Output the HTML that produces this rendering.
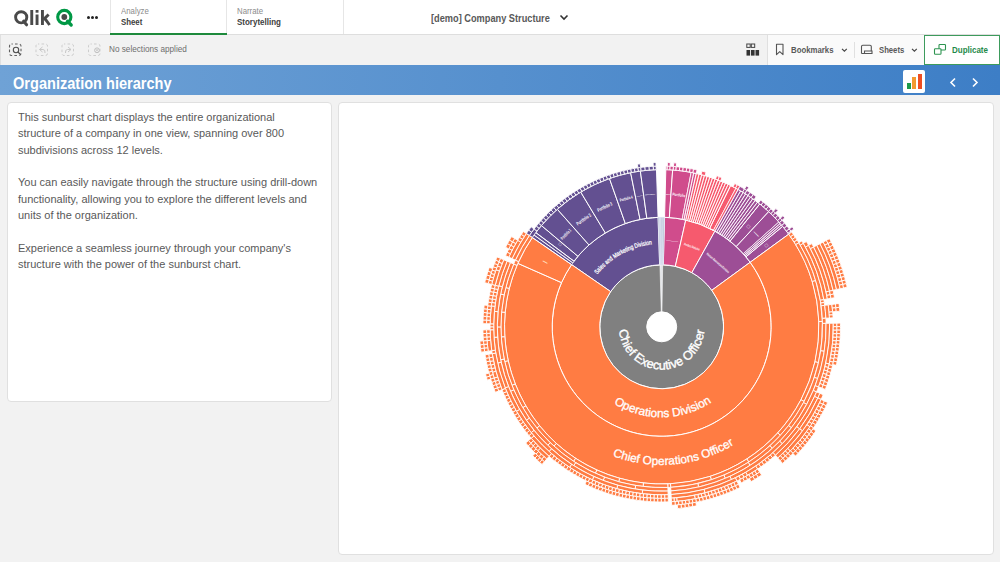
<!DOCTYPE html>
<html><head><meta charset="utf-8">
<style>
*{margin:0;padding:0;box-sizing:border-box}
html,body{width:1000px;height:562px;overflow:hidden;background:#f2f2f2;font-family:"Liberation Sans",sans-serif}
.a{position:absolute}
.t{white-space:nowrap;line-height:1;transform-origin:0 0}
</style></head><body>
<!-- top header -->
<div class="a" style="left:0;top:0;width:1000px;height:35px;background:#fff;border-bottom:1px solid #dedede"></div>
<!-- logo -->
<svg class="a" style="left:13px;top:7px" width="64" height="21" viewBox="0 0 64 21">
<g fill="none" stroke="#4a4a4a" stroke-width="2.9">
<circle cx="8.2" cy="10.3" r="5.6"/>
</g>
<path d="M10.6 14.2 L13.6 17.8" stroke="#4a4a4a" stroke-width="3" stroke-linecap="round"/>
<rect x="17.3" y="3" width="2.9" height="15" fill="#4a4a4a"/>
<rect x="22.6" y="7.5" width="2.9" height="10.5" fill="#4a4a4a"/>
<rect x="22.6" y="3" width="2.9" height="2.7" fill="#4a4a4a"/>
<rect x="28" y="3" width="2.9" height="15" fill="#4a4a4a"/>
<path d="M30.5 12.6 L35.6 7.5 M31.8 11.4 L36.6 18" stroke="#4a4a4a" stroke-width="2.9"/>
<circle cx="51.3" cy="10" r="6.6" fill="none" stroke="#009845" stroke-width="3.1"/>
<circle cx="51.3" cy="10" r="2.9" fill="#4a4a4a"/>
<path d="M54.6 14.3 L58.2 18" stroke="#009845" stroke-width="3.3" stroke-linecap="round"/>
</svg>
<div class="a" style="left:87px;top:16px;width:2.6px;height:2.6px;border-radius:2px;background:#222"></div>
<div class="a" style="left:91px;top:16px;width:2.6px;height:2.6px;border-radius:2px;background:#222"></div>
<div class="a" style="left:95px;top:16px;width:2.6px;height:2.6px;border-radius:2px;background:#222"></div>
<!-- tabs -->
<div class="a" style="left:110px;top:0;width:1px;height:34px;background:#e6e6e6"></div>
<div class="a" style="left:226px;top:0;width:1px;height:34px;background:#e6e6e6"></div>
<div class="a" style="left:343px;top:0;width:1px;height:34px;background:#e6e6e6"></div>
<div class="a" style="left:110px;top:33px;width:117px;height:2px;background:#1e8a3c"></div>
<div class="a t" style="left:121px;top:6.5px;font-size:9px;color:#8c8c8c;transform:scaleX(0.87)">Analyze</div>
<div class="a t" style="left:121px;top:17.5px;font-size:9px;font-weight:bold;color:#404040;transform:scaleX(0.87)">Sheet</div>
<div class="a t" style="left:237px;top:6.5px;font-size:9px;color:#8c8c8c;transform:scaleX(0.87)">Narrate</div>
<div class="a t" style="left:237px;top:17.5px;font-size:9px;font-weight:bold;color:#404040;transform:scaleX(0.887)">Storytelling</div>
<!-- title -->
<div class="a t" style="left:431px;top:12.5px;font-size:10.6px;font-weight:bold;color:#595959;transform:scaleX(0.87)">[demo] Company Structure</div>
<svg class="a" style="left:558px;top:13px" width="12" height="10" viewBox="0 0 12 10"><path d="M2.5 2.5 L6 6 L9.5 2.5" fill="none" stroke="#333" stroke-width="1.6"/></svg>

<!-- toolbar -->
<div class="a" style="left:767px;top:35px;width:158px;height:30px;background:#fafafa;border-left:1px solid #e0e0e0"></div>
<div class="a" style="left:0;top:35px;width:1px;height:30px;background:#e0e0e0"></div>
<svg class="a" style="left:0;top:35px" width="110" height="30" viewBox="0 35 110 30">
<rect x="9.5" y="44" width="11.5" height="11.5" rx="2" fill="none" stroke="#606060" stroke-width="1.1" stroke-dasharray="2.6 2.2" stroke-dashoffset="1.3"/>
<circle cx="16" cy="50" r="2.7" fill="none" stroke="#505050" stroke-width="1.1"/>
<path d="M18 52 L20.6 54.6" stroke="#505050" stroke-width="1.3"/>
<rect x="36" y="44" width="11.5" height="11.5" rx="2" fill="none" stroke="#cdcdcd" stroke-width="1" stroke-dasharray="2.6 2.2" stroke-dashoffset="1.3"/>
<path d="M39.5 49.5 L42.5 47 M39.5 49.5 L42.5 52 M39.5 49.5 H43 Q45.5 49.5 45 53" fill="none" stroke="#c8c8c8" stroke-width="1"/>
<rect x="62" y="44" width="11.5" height="11.5" rx="2" fill="none" stroke="#cdcdcd" stroke-width="1" stroke-dasharray="2.6 2.2" stroke-dashoffset="1.3"/>
<path d="M71 49.5 L68 47 M71 49.5 L68 52 M71 49.5 H67.5 Q65 49.5 65.5 53" fill="none" stroke="#c8c8c8" stroke-width="1"/>
<rect x="88.5" y="44" width="11.5" height="11.5" rx="2" fill="none" stroke="#cdcdcd" stroke-width="1" stroke-dasharray="2.6 2.2" stroke-dashoffset="1.3"/>
<circle cx="97" cy="50.3" r="2.4" fill="none" stroke="#c0c0c0" stroke-width="1"/>
<path d="M95.8 49.1 L98.2 51.5 M98.2 49.1 L95.8 51.5" stroke="#c0c0c0" stroke-width="0.8"/>
</svg>
<div class="a t" style="left:109.4px;top:45.2px;font-size:9px;color:#6e6e6e;transform:scaleX(0.91)">No selections applied</div>
<!-- right toolbar -->
<svg class="a" style="left:740px;top:35px" width="260" height="30" viewBox="740 35 260 30">
<rect x="746.8" y="44" width="3.4" height="3.4" fill="none" stroke="#444" stroke-width="1"/>
<rect x="751.3" y="44" width="3.4" height="3.4" fill="none" stroke="#444" stroke-width="1"/>
<rect x="746.5" y="50" width="3.6" height="5.6" fill="#333"/>
<rect x="751" y="50" width="3.6" height="5.6" fill="#333"/>
<rect x="755.5" y="50" width="3.6" height="5.6" fill="#333"/>
<path d="M776.5 44.2 H783 V54.6 L779.75 51.6 L776.5 54.6 Z" fill="none" stroke="#555" stroke-width="1.1" stroke-linejoin="round"/>
<path d="M842 48.8 L844.4 51.2 L846.8 48.8" fill="none" stroke="#444" stroke-width="1.2"/>
<rect x="854" y="42" width="1" height="16" fill="#e0e0e0"/>
<path d="M861.5 53.5 V46.5 Q861.5 45.2 862.8 45.2 H870 Q871.3 45.2 871.3 46.5 V50.5 M861.5 53.5 H872 V51 H864.5 V53.5" fill="none" stroke="#555" stroke-width="1.1"/>
<path d="M912 48.8 L914.4 51.2 L916.8 48.8" fill="none" stroke="#444" stroke-width="1.2"/>
<rect x="924.5" y="35.5" width="75" height="29" fill="#fff" stroke="#3d9b5c" stroke-width="1"/>
<rect x="939" y="44.5" width="6.5" height="5.5" rx="0.8" fill="#fff" stroke="#2d9450" stroke-width="1.1"/>
<rect x="934.5" y="48.8" width="6.5" height="5.5" rx="0.8" fill="#fff" stroke="#2d9450" stroke-width="1.1"/>
</svg>
<div class="a t" style="left:791.4px;top:45px;font-size:9.8px;font-weight:bold;color:#595959;transform:scaleX(0.796)">Bookmarks</div>
<div class="a t" style="left:878.8px;top:45px;font-size:9.8px;font-weight:bold;color:#595959;transform:scaleX(0.785)">Sheets</div>
<div class="a t" style="left:952px;top:45px;font-size:9.8px;font-weight:bold;color:#1f8a4a;transform:scaleX(0.816)">Duplicate</div>

<!-- title bar -->
<div class="a" style="left:0;top:65px;width:1000px;height:30px;background:linear-gradient(90deg,#6fa2d6,#3d7ec6)"></div>
<div class="a t" style="left:13px;top:75.5px;font-size:16px;font-weight:bold;color:#fff;transform:scaleX(0.91)">Organization hierarchy</div>
<div class="a" style="left:902.5px;top:70px;width:22px;height:22.5px;background:#fff;border-radius:2px"></div>
<div class="a" style="left:907px;top:82.5px;width:3.5px;height:6px;background:#1d9a4a"></div>
<div class="a" style="left:911.8px;top:77px;width:4px;height:11.5px;background:#f39a31"></div>
<div class="a" style="left:917.6px;top:73.5px;width:4px;height:15px;background:#ee4e22"></div>
<svg class="a" style="left:940px;top:70px" width="50" height="25" viewBox="940 70 50 25">
<path d="M955 78.5 L951 82.5 L955 86.5" fill="none" stroke="#fff" stroke-width="1.6"/>
<path d="M973 78.5 L977 82.5 L973 86.5" fill="none" stroke="#fff" stroke-width="1.6"/>
</svg>

<!-- panels -->
<div class="a" style="left:6.5px;top:101.5px;width:325px;height:300.5px;background:#fff;border:1px solid #e0e0e0;border-radius:4px"></div>
<div class="a" style="left:337.5px;top:101.5px;width:656px;height:453.5px;background:#fff;border:1px solid #e0e0e0;border-radius:4px"></div>

<div class="a" style="left:18px;top:109px;font-size:11px;line-height:16.35px;color:#595959;white-space:nowrap">This sunburst chart displays the entire organizational<br>structure of a company in one view, spanning over 800<br>subdivisions across 12 levels.<br><br>You can easily navigate through the structure using drill-down<br>functionality, allowing you to explore the different levels and<br>units of the organization.<br><br>Experience a seamless journey through your company's<br>structure with the power of the sunburst chart.</div>

<svg class="a" style="left:0;top:0" width="1000" height="562" viewBox="0 0 1000 562"><path d="M599.70,326.80A62,62 0 1 1 723.70,326.80A62,62 0 1 1 599.70,326.80ZM646.70,326.80A15,15 0 1 0 676.70,326.80A15,15 0 1 0 646.70,326.80Z" fill="#808080" fill-rule="evenodd" stroke="#fff" stroke-width="1.0"/><path d="M659.97,264.82A62,62 0 0 1 662.67,264.81L661.94,311.80A15,15 0 0 0 661.28,311.81Z" fill="#e4e6ea" stroke="#fff" stroke-width="0.6"/><path d="M571.57,264.62A109.5,109.5 0 0 1 658.07,217.36L659.64,264.83A62,62 0 0 0 610.67,291.59Z" fill="#635091" stroke="#fff" stroke-width="1.0"/><path d="M664.57,217.34A109.5,109.5 0 0 1 685.77,219.98L675.33,266.32A62,62 0 0 0 663.32,264.82Z" fill="#d04c8c" stroke="#fff" stroke-width="1.0"/><path d="M685.77,219.98A109.5,109.5 0 0 1 714.95,231.12L691.85,272.63A62,62 0 0 0 675.33,266.32Z" fill="#f65a6e" stroke="#fff" stroke-width="1.0"/><path d="M714.95,231.12A109.5,109.5 0 0 1 750.17,262.28L711.80,290.27A62,62 0 0 0 691.85,272.63Z" fill="#9d4e96" stroke="#fff" stroke-width="1.0"/><path d="M750.17,262.28A109.5,109.5 0 1 1 571.57,264.62L610.67,291.59A62,62 0 1 0 711.80,290.27Z" fill="#ff7c43" stroke="#fff" stroke-width="1.0"/><path d="M658.07,217.36A109.5,109.5 0 0 1 659.60,217.32L660.51,264.81A62,62 0 0 0 659.64,264.83Z" fill="#a9b8c9" stroke="#eef" stroke-width="0.5"/><path d="M659.60,217.32A109.5,109.5 0 0 1 660.74,217.30L661.16,264.80A62,62 0 0 0 660.51,264.81Z" fill="#a9b8c9" stroke="#eef" stroke-width="0.5"/><path d="M660.74,217.30A109.5,109.5 0 0 1 662.08,217.30L661.92,264.80A62,62 0 0 0 661.16,264.80Z" fill="#a9b8c9" stroke="#eef" stroke-width="0.5"/><path d="M662.08,217.30A109.5,109.5 0 0 1 663.23,217.31L662.57,264.81A62,62 0 0 0 661.92,264.80Z" fill="#a9b8c9" stroke="#eef" stroke-width="0.5"/><path d="M663.23,217.31A109.5,109.5 0 0 1 664.57,217.34L663.32,264.82A62,62 0 0 0 662.57,264.81Z" fill="#a9b8c9" stroke="#eef" stroke-width="0.5"/><path d="M532.30,237.53A157.2,157.2 0 0 1 534.04,235.07L572.78,262.90A109.5,109.5 0 0 0 571.57,264.62Z" fill="#635091" stroke="none" stroke-width="0"/><path d="M534.04,235.07A157.2,157.2 0 0 1 535.83,232.63L574.02,261.21A109.5,109.5 0 0 0 572.78,262.90Z" fill="#635091" stroke="none" stroke-width="0"/><path d="M535.83,232.63A157.2,157.2 0 0 1 541.45,225.54L577.94,256.27A109.5,109.5 0 0 0 574.02,261.21Z" fill="#635091" stroke="#fff" stroke-width="1.0"/><path d="M541.45,225.54A157.2,157.2 0 0 1 557.33,209.25L589.00,244.92A109.5,109.5 0 0 0 577.94,256.27Z" fill="#635091" stroke="#fff" stroke-width="1.0"/><path d="M557.33,209.25A157.2,157.2 0 0 1 580.74,192.05L605.30,232.94A109.5,109.5 0 0 0 589.00,244.92Z" fill="#635091" stroke="#fff" stroke-width="1.0"/><path d="M580.74,192.05A157.2,157.2 0 0 1 609.48,178.53L625.33,223.52A109.5,109.5 0 0 0 605.30,232.94Z" fill="#635091" stroke="#fff" stroke-width="1.0"/><path d="M609.48,178.53A157.2,157.2 0 0 1 630.63,172.70L640.06,219.46A109.5,109.5 0 0 0 625.33,223.52Z" fill="#635091" stroke="#fff" stroke-width="1.0"/><path d="M630.63,172.70A157.2,157.2 0 0 1 640.37,171.05L646.84,218.31A109.5,109.5 0 0 0 640.06,219.46Z" fill="#635091" stroke="#fff" stroke-width="1.0"/><path d="M640.37,171.05A157.2,157.2 0 0 1 656.49,169.69L658.07,217.36A109.5,109.5 0 0 0 646.84,218.31Z" fill="#635091" stroke="#fff" stroke-width="1.0"/><path d="M665.82,169.65A157.2,157.2 0 0 1 672.67,169.98L669.34,217.57A109.5,109.5 0 0 0 664.57,217.34Z" fill="#d04c8c" stroke="#fff" stroke-width="1.0"/><path d="M672.67,169.98A157.2,157.2 0 0 1 691.16,172.38L682.22,219.24A109.5,109.5 0 0 0 669.34,217.57Z" fill="#d04c8c" stroke="#fff" stroke-width="1.0"/><path d="M691.16,172.38A157.2,157.2 0 0 1 693.71,172.89L684.00,219.59A109.5,109.5 0 0 0 682.22,219.24Z" fill="#d04c8c" stroke="none" stroke-width="0"/><path d="M693.71,172.89A157.2,157.2 0 0 1 696.26,173.45L685.77,219.98A109.5,109.5 0 0 0 684.00,219.59Z" fill="#d04c8c" stroke="none" stroke-width="0"/><path d="M696.26,173.45A157.2,157.2 0 0 1 698.99,174.09L687.68,220.43A109.5,109.5 0 0 0 685.77,219.98Z" fill="#f65a6e" stroke="none" stroke-width="0"/><path d="M698.99,174.09A157.2,157.2 0 0 1 701.71,174.78L689.57,220.91A109.5,109.5 0 0 0 687.68,220.43Z" fill="#f65a6e" stroke="none" stroke-width="0"/><path d="M701.71,174.78A157.2,157.2 0 0 1 704.42,175.52L691.46,221.42A109.5,109.5 0 0 0 689.57,220.91Z" fill="#f65a6e" stroke="none" stroke-width="0"/><path d="M704.42,175.52A157.2,157.2 0 0 1 707.12,176.30L693.33,221.97A109.5,109.5 0 0 0 691.46,221.42Z" fill="#f65a6e" stroke="none" stroke-width="0"/><path d="M707.12,176.30A157.2,157.2 0 0 1 709.80,177.14L695.20,222.55A109.5,109.5 0 0 0 693.33,221.97Z" fill="#f65a6e" stroke="none" stroke-width="0"/><path d="M709.80,177.14A157.2,157.2 0 0 1 712.46,178.02L697.06,223.17A109.5,109.5 0 0 0 695.20,222.55Z" fill="#f65a6e" stroke="none" stroke-width="0"/><path d="M712.46,178.02A157.2,157.2 0 0 1 715.11,178.95L698.90,223.81A109.5,109.5 0 0 0 697.06,223.17Z" fill="#f65a6e" stroke="none" stroke-width="0"/><path d="M715.11,178.95A157.2,157.2 0 0 1 717.74,179.93L700.74,224.49A109.5,109.5 0 0 0 698.90,223.81Z" fill="#f65a6e" stroke="none" stroke-width="0"/><path d="M717.74,179.93A157.2,157.2 0 0 1 720.35,180.95L702.56,225.21A109.5,109.5 0 0 0 700.74,224.49Z" fill="#f65a6e" stroke="none" stroke-width="0"/><path d="M720.35,180.95A157.2,157.2 0 0 1 722.95,182.02L704.36,225.95A109.5,109.5 0 0 0 702.56,225.21Z" fill="#f65a6e" stroke="none" stroke-width="0"/><path d="M722.95,182.02A157.2,157.2 0 0 1 725.52,183.14L706.16,226.73A109.5,109.5 0 0 0 704.36,225.95Z" fill="#f65a6e" stroke="none" stroke-width="0"/><path d="M725.52,183.14A157.2,157.2 0 0 1 728.08,184.30L707.94,227.54A109.5,109.5 0 0 0 706.16,226.73Z" fill="#f65a6e" stroke="none" stroke-width="0"/><path d="M728.08,184.30A157.2,157.2 0 0 1 730.61,185.51L709.70,228.38A109.5,109.5 0 0 0 707.94,227.54Z" fill="#f65a6e" stroke="none" stroke-width="0"/><path d="M730.61,185.51A157.2,157.2 0 0 1 735.98,188.26L713.44,230.30A109.5,109.5 0 0 0 709.70,228.38Z" fill="#f65a6e" stroke="#fff" stroke-width="1.0"/><path d="M735.98,188.26A157.2,157.2 0 0 1 738.15,189.44L714.95,231.12A109.5,109.5 0 0 0 713.44,230.30Z" fill="#f65a6e" stroke="none" stroke-width="0"/><path d="M738.15,189.44A157.2,157.2 0 0 1 740.67,190.87L716.71,232.12A109.5,109.5 0 0 0 714.95,231.12Z" fill="#9d4e96" stroke="none" stroke-width="0"/><path d="M740.67,190.87A157.2,157.2 0 0 1 743.16,192.35L718.44,233.15A109.5,109.5 0 0 0 716.71,232.12Z" fill="#9d4e96" stroke="none" stroke-width="0"/><path d="M743.16,192.35A157.2,157.2 0 0 1 745.62,193.88L720.16,234.21A109.5,109.5 0 0 0 718.44,233.15Z" fill="#9d4e96" stroke="none" stroke-width="0"/><path d="M745.62,193.88A157.2,157.2 0 0 1 748.06,195.44L721.85,235.30A109.5,109.5 0 0 0 720.16,234.21Z" fill="#9d4e96" stroke="none" stroke-width="0"/><path d="M748.06,195.44A157.2,157.2 0 0 1 750.46,197.06L723.53,236.43A109.5,109.5 0 0 0 721.85,235.30Z" fill="#9d4e96" stroke="none" stroke-width="0"/><path d="M750.46,197.06A157.2,157.2 0 0 1 752.84,198.71L725.18,237.58A109.5,109.5 0 0 0 723.53,236.43Z" fill="#9d4e96" stroke="none" stroke-width="0"/><path d="M752.84,198.71A157.2,157.2 0 0 1 755.18,200.42L726.82,238.77A109.5,109.5 0 0 0 725.18,237.58Z" fill="#9d4e96" stroke="none" stroke-width="0"/><path d="M755.18,200.42A157.2,157.2 0 0 1 757.49,202.16L728.43,239.98A109.5,109.5 0 0 0 726.82,238.77Z" fill="#9d4e96" stroke="none" stroke-width="0"/><path d="M757.49,202.16A157.2,157.2 0 0 1 759.77,203.94L730.01,241.22A109.5,109.5 0 0 0 728.43,239.98Z" fill="#9d4e96" stroke="none" stroke-width="0"/><path d="M759.77,203.94A157.2,157.2 0 0 1 768.71,211.64L736.24,246.59A109.5,109.5 0 0 0 730.01,241.22Z" fill="#9d4e96" stroke="#fff" stroke-width="1.0"/><path d="M768.71,211.64A157.2,157.2 0 0 1 778.89,222.02L743.33,253.81A109.5,109.5 0 0 0 736.24,246.59Z" fill="#9d4e96" stroke="#fff" stroke-width="1.0"/><path d="M778.89,222.02A157.2,157.2 0 0 1 780.16,223.46L744.22,254.82A109.5,109.5 0 0 0 743.33,253.81Z" fill="#9d4e96" stroke="none" stroke-width="0"/><path d="M780.16,223.46A157.2,157.2 0 0 1 781.41,224.92L745.09,255.83A109.5,109.5 0 0 0 744.22,254.82Z" fill="#9d4e96" stroke="none" stroke-width="0"/><path d="M781.41,224.92A157.2,157.2 0 0 1 782.65,226.39L745.95,256.85A109.5,109.5 0 0 0 745.09,255.83Z" fill="#9d4e96" stroke="none" stroke-width="0"/><path d="M782.65,226.39A157.2,157.2 0 0 1 788.72,234.18L750.17,262.28A109.5,109.5 0 0 0 745.95,256.85Z" fill="#9d4e96" stroke="#fff" stroke-width="1.0"/><path d="M788.72,234.18A157.2,157.2 0 1 1 517.87,263.36L561.51,282.61A109.5,109.5 0 1 0 750.17,262.28Z" fill="#ff7c43" stroke="#fff" stroke-width="1.0"/><path d="M517.87,263.36A157.2,157.2 0 0 1 532.30,237.53L571.57,264.62A109.5,109.5 0 0 0 561.51,282.61Z" fill="#ff7c43" stroke="#fff" stroke-width="1.0"/><path d="M571.57,264.62L532.30,237.53M572.78,262.90L534.04,235.07M572.78,262.90L534.04,235.07M574.02,261.21L535.83,232.63M682.22,219.24L691.16,172.38M684.00,219.59L693.71,172.89M684.00,219.59L693.71,172.89M685.77,219.98L696.26,173.45M685.77,219.98L696.26,173.45M687.68,220.43L698.99,174.09M687.68,220.43L698.99,174.09M689.57,220.91L701.71,174.78M689.57,220.91L701.71,174.78M691.46,221.42L704.42,175.52M691.46,221.42L704.42,175.52M693.33,221.97L707.12,176.30M693.33,221.97L707.12,176.30M695.20,222.55L709.80,177.14M695.20,222.55L709.80,177.14M697.06,223.17L712.46,178.02M697.06,223.17L712.46,178.02M698.90,223.81L715.11,178.95M698.90,223.81L715.11,178.95M700.74,224.49L717.74,179.93M700.74,224.49L717.74,179.93M702.56,225.21L720.35,180.95M702.56,225.21L720.35,180.95M704.36,225.95L722.95,182.02M704.36,225.95L722.95,182.02M706.16,226.73L725.52,183.14M706.16,226.73L725.52,183.14M707.94,227.54L728.08,184.30M707.94,227.54L728.08,184.30M709.70,228.38L730.61,185.51M713.44,230.30L735.98,188.26M714.95,231.12L738.15,189.44M714.95,231.12L738.15,189.44M716.71,232.12L740.67,190.87M716.71,232.12L740.67,190.87M718.44,233.15L743.16,192.35M718.44,233.15L743.16,192.35M720.16,234.21L745.62,193.88M720.16,234.21L745.62,193.88M721.85,235.30L748.06,195.44M721.85,235.30L748.06,195.44M723.53,236.43L750.46,197.06M723.53,236.43L750.46,197.06M725.18,237.58L752.84,198.71M725.18,237.58L752.84,198.71M726.82,238.77L755.18,200.42M726.82,238.77L755.18,200.42M728.43,239.98L757.49,202.16M728.43,239.98L757.49,202.16M730.01,241.22L759.77,203.94M743.33,253.81L778.89,222.02M744.22,254.82L780.16,223.46M744.22,254.82L780.16,223.46M745.09,255.83L781.41,224.92M745.09,255.83L781.41,224.92M745.95,256.85L782.65,226.39" stroke="#fff" stroke-width="0.75" fill="none"/><path d="M682.22,219.24A109.5,109.5 0 0 1 714.95,231.12" stroke="#fff" stroke-width="1" fill="none"/><path d="M691.16,172.38A157.2,157.2 0 0 1 738.15,189.44" stroke="#fff" stroke-width="1" fill="none"/><path d="M714.95,231.12A109.5,109.5 0 0 1 730.01,241.22" stroke="#fff" stroke-width="1" fill="none"/><path d="M738.15,189.44A157.2,157.2 0 0 1 759.77,203.94" stroke="#fff" stroke-width="1" fill="none"/><path d="M743.33,253.81A109.5,109.5 0 0 1 745.95,256.85" stroke="#fff" stroke-width="1" fill="none"/><path d="M778.89,222.02A157.2,157.2 0 0 1 782.65,226.39" stroke="#fff" stroke-width="1" fill="none"/><path d="M529.34,235.49A160.79999999999998,160.79999999999998 0 0 1 534.13,228.91L536.98,231.10A157.2,157.2 0 0 0 532.30,237.53Z" fill="#635091" stroke="#fff" stroke-width="0.9"/><path d="M534.13,228.91A160.79999999999998,160.79999999999998 0 0 1 536.37,226.05L539.18,228.31A157.2,157.2 0 0 0 536.98,231.10Z" fill="#635091" stroke="#fff" stroke-width="0.9"/><path d="M536.37,226.05A160.79999999999998,160.79999999999998 0 0 1 538.68,223.25L541.43,225.57A157.2,157.2 0 0 0 539.18,228.31Z" fill="#635091" stroke="#fff" stroke-width="0.9"/><path d="M538.68,223.25A160.79999999999998,160.79999999999998 0 0 1 541.05,220.50L543.75,222.88A157.2,157.2 0 0 0 541.43,225.57Z" fill="#635091" stroke="#fff" stroke-width="0.9"/><path d="M541.05,220.50A160.79999999999998,160.79999999999998 0 0 1 543.48,217.80L546.13,220.24A157.2,157.2 0 0 0 543.75,222.88Z" fill="#635091" stroke="#fff" stroke-width="0.9"/><path d="M543.48,217.80A160.79999999999998,160.79999999999998 0 0 1 545.97,215.16L548.56,217.66A157.2,157.2 0 0 0 546.13,220.24Z" fill="#635091" stroke="#fff" stroke-width="0.9"/><path d="M545.97,215.16A160.79999999999998,160.79999999999998 0 0 1 548.52,212.57L551.06,215.13A157.2,157.2 0 0 0 548.56,217.66Z" fill="#635091" stroke="#fff" stroke-width="0.9"/><path d="M548.52,212.57A160.79999999999998,160.79999999999998 0 0 1 551.13,210.05L553.61,212.66A157.2,157.2 0 0 0 551.06,215.13Z" fill="#635091" stroke="#fff" stroke-width="0.9"/><path d="M551.13,210.05A160.79999999999998,160.79999999999998 0 0 1 553.80,207.58L556.21,210.25A157.2,157.2 0 0 0 553.61,212.66Z" fill="#635091" stroke="#fff" stroke-width="0.9"/><path d="M553.80,207.58A160.79999999999998,160.79999999999998 0 0 1 556.52,205.17L558.87,207.90A157.2,157.2 0 0 0 556.21,210.25Z" fill="#635091" stroke="#fff" stroke-width="0.9"/><path d="M556.52,205.17A160.79999999999998,160.79999999999998 0 0 1 559.29,202.83L561.58,205.60A157.2,157.2 0 0 0 558.87,207.90Z" fill="#635091" stroke="#fff" stroke-width="0.9"/><path d="M559.29,202.83A160.79999999999998,160.79999999999998 0 0 1 562.12,200.55L564.35,203.37A157.2,157.2 0 0 0 561.58,205.60Z" fill="#635091" stroke="#fff" stroke-width="0.9"/><path d="M562.12,200.55A160.79999999999998,160.79999999999998 0 0 1 564.99,198.33L567.16,201.21A157.2,157.2 0 0 0 564.35,203.37Z" fill="#635091" stroke="#fff" stroke-width="0.9"/><path d="M564.99,198.33A160.79999999999998,160.79999999999998 0 0 1 567.92,196.18L570.02,199.10A157.2,157.2 0 0 0 567.16,201.21Z" fill="#635091" stroke="#fff" stroke-width="0.9"/><path d="M567.92,196.18A160.79999999999998,160.79999999999998 0 0 1 570.89,194.09L572.93,197.06A157.2,157.2 0 0 0 570.02,199.10Z" fill="#635091" stroke="#fff" stroke-width="0.9"/><path d="M570.89,194.09A160.79999999999998,160.79999999999998 0 0 1 573.91,192.08L575.88,195.09A157.2,157.2 0 0 0 572.93,197.06Z" fill="#635091" stroke="#fff" stroke-width="0.9"/><path d="M573.91,192.08A160.79999999999998,160.79999999999998 0 0 1 576.98,190.13L578.88,193.19A157.2,157.2 0 0 0 575.88,195.09Z" fill="#635091" stroke="#fff" stroke-width="0.9"/><path d="M576.98,190.13A160.79999999999998,160.79999999999998 0 0 1 580.09,188.25L581.91,191.35A157.2,157.2 0 0 0 578.88,193.19Z" fill="#635091" stroke="#fff" stroke-width="0.9"/><path d="M580.09,188.25A160.79999999999998,160.79999999999998 0 0 1 583.24,186.44L584.99,189.58A157.2,157.2 0 0 0 581.91,191.35Z" fill="#635091" stroke="#fff" stroke-width="0.9"/><path d="M583.24,186.44A160.79999999999998,160.79999999999998 0 0 1 586.43,184.71L588.11,187.89A157.2,157.2 0 0 0 584.99,189.58Z" fill="#635091" stroke="#fff" stroke-width="0.9"/><path d="M586.43,184.71A160.79999999999998,160.79999999999998 0 0 1 589.66,183.04L591.27,186.26A157.2,157.2 0 0 0 588.11,187.89Z" fill="#635091" stroke="#fff" stroke-width="0.9"/><path d="M589.66,183.04A160.79999999999998,160.79999999999998 0 0 1 592.92,181.45L594.46,184.71A157.2,157.2 0 0 0 591.27,186.26Z" fill="#635091" stroke="#fff" stroke-width="0.9"/><path d="M592.92,181.45A160.79999999999998,160.79999999999998 0 0 1 596.22,179.94L597.69,183.22A157.2,157.2 0 0 0 594.46,184.71Z" fill="#635091" stroke="#fff" stroke-width="0.9"/><path d="M596.22,179.94A160.79999999999998,160.79999999999998 0 0 1 599.55,178.49L600.95,181.81A157.2,157.2 0 0 0 597.69,183.22Z" fill="#635091" stroke="#fff" stroke-width="0.9"/><path d="M599.55,178.49A160.79999999999998,160.79999999999998 0 0 1 602.92,177.13L604.24,180.48A157.2,157.2 0 0 0 600.95,181.81Z" fill="#635091" stroke="#fff" stroke-width="0.9"/><path d="M602.92,177.13A160.79999999999998,160.79999999999998 0 0 1 606.32,175.84L607.56,179.22A157.2,157.2 0 0 0 604.24,180.48Z" fill="#635091" stroke="#fff" stroke-width="0.9"/><path d="M606.32,175.84A160.79999999999998,160.79999999999998 0 0 1 609.74,174.63L610.90,178.03A157.2,157.2 0 0 0 607.56,179.22Z" fill="#635091" stroke="#fff" stroke-width="0.9"/><path d="M609.74,174.63A160.79999999999998,160.79999999999998 0 0 1 613.19,173.49L614.28,176.92A157.2,157.2 0 0 0 610.90,178.03Z" fill="#635091" stroke="#fff" stroke-width="0.9"/><path d="M613.19,173.49A160.79999999999998,160.79999999999998 0 0 1 616.66,172.44L617.67,175.89A157.2,157.2 0 0 0 614.28,176.92Z" fill="#635091" stroke="#fff" stroke-width="0.9"/><path d="M616.66,172.44A160.79999999999998,160.79999999999998 0 0 1 620.16,171.46L621.09,174.94A157.2,157.2 0 0 0 617.67,175.89Z" fill="#635091" stroke="#fff" stroke-width="0.9"/><path d="M620.16,171.46A160.79999999999998,160.79999999999998 0 0 1 623.68,170.56L624.53,174.06A157.2,157.2 0 0 0 621.09,174.94Z" fill="#635091" stroke="#fff" stroke-width="0.9"/><path d="M623.68,170.56A160.79999999999998,160.79999999999998 0 0 1 627.22,169.74L627.99,173.26A157.2,157.2 0 0 0 624.53,174.06Z" fill="#635091" stroke="#fff" stroke-width="0.9"/><path d="M627.22,169.74A160.79999999999998,160.79999999999998 0 0 1 630.77,169.00L631.47,172.53A157.2,157.2 0 0 0 627.99,173.26Z" fill="#635091" stroke="#fff" stroke-width="0.9"/><path d="M630.77,169.00A160.79999999999998,160.79999999999998 0 0 1 634.35,168.34L634.96,171.89A157.2,157.2 0 0 0 631.47,172.53Z" fill="#635091" stroke="#fff" stroke-width="0.9"/><path d="M634.35,168.34A160.79999999999998,160.79999999999998 0 0 1 637.93,167.77L638.46,171.33A157.2,157.2 0 0 0 634.96,171.89Z" fill="#635091" stroke="#fff" stroke-width="0.9"/><path d="M637.93,167.77A160.79999999999998,160.79999999999998 0 0 1 640.71,167.38L641.18,170.94A157.2,157.2 0 0 0 638.46,171.33Z" fill="#635091" stroke="#fff" stroke-width="0.9"/><path d="M640.71,167.38A160.79999999999998,160.79999999999998 0 0 1 644.89,166.88L645.27,170.46A157.2,157.2 0 0 0 641.18,170.94Z" fill="#635091" stroke="#fff" stroke-width="0.9"/><path d="M644.89,166.88A160.79999999999998,160.79999999999998 0 0 1 649.08,166.50L649.37,170.08A157.2,157.2 0 0 0 645.27,170.46Z" fill="#635091" stroke="#fff" stroke-width="0.9"/><path d="M649.08,166.50A160.79999999999998,160.79999999999998 0 0 1 653.28,166.22L653.47,169.82A157.2,157.2 0 0 0 649.37,170.08Z" fill="#635091" stroke="#fff" stroke-width="0.9"/><path d="M653.28,166.22A160.79999999999998,160.79999999999998 0 0 1 656.09,166.10L656.21,169.70A157.2,157.2 0 0 0 653.47,169.82Z" fill="#635091" stroke="#fff" stroke-width="0.9"/><path d="M665.91,166.06A160.79999999999998,160.79999999999998 0 0 1 667.31,166.10L667.19,169.70A157.2,157.2 0 0 0 665.82,169.65Z" fill="#d04c8c" stroke="#fff" stroke-width="0.9"/><path d="M667.31,166.10A160.79999999999998,160.79999999999998 0 0 1 670.12,166.22L669.93,169.82A157.2,157.2 0 0 0 667.19,169.70Z" fill="#d04c8c" stroke="#fff" stroke-width="0.9"/><path d="M670.12,166.22A160.79999999999998,160.79999999999998 0 0 1 673.48,166.43L673.21,170.02A157.2,157.2 0 0 0 669.93,169.82Z" fill="#d04c8c" stroke="#fff" stroke-width="0.9"/><path d="M673.48,166.43A160.79999999999998,160.79999999999998 0 0 1 676.27,166.66L675.95,170.25A157.2,157.2 0 0 0 673.21,170.02Z" fill="#d04c8c" stroke="#fff" stroke-width="0.9"/><path d="M676.27,166.66A160.79999999999998,160.79999999999998 0 0 1 679.76,167.02L679.36,170.60A157.2,157.2 0 0 0 675.95,170.25Z" fill="#d04c8c" stroke="#fff" stroke-width="0.9"/><path d="M679.76,167.02A160.79999999999998,160.79999999999998 0 0 1 683.24,167.45L682.76,171.02A157.2,157.2 0 0 0 679.36,170.60Z" fill="#d04c8c" stroke="#fff" stroke-width="0.9"/><path d="M683.24,167.45A160.79999999999998,160.79999999999998 0 0 1 686.72,167.96L686.16,171.51A157.2,157.2 0 0 0 682.76,171.02Z" fill="#d04c8c" stroke="#fff" stroke-width="0.9"/><path d="M686.72,167.96A160.79999999999998,160.79999999999998 0 0 1 690.18,168.54L689.54,172.08A157.2,157.2 0 0 0 686.16,171.51Z" fill="#d04c8c" stroke="#fff" stroke-width="0.9"/><path d="M690.18,168.54A160.79999999999998,160.79999999999998 0 0 1 693.62,169.20L692.91,172.73A157.2,157.2 0 0 0 689.54,172.08Z" fill="#d04c8c" stroke="#fff" stroke-width="0.9"/><path d="M693.62,169.20A160.79999999999998,160.79999999999998 0 0 1 697.05,169.93L696.26,173.45A157.2,157.2 0 0 0 692.91,172.73Z" fill="#d04c8c" stroke="#fff" stroke-width="0.9"/><path d="M701.96,171.12A160.79999999999998,160.79999999999998 0 0 1 706.02,172.23L705.03,175.69A157.2,157.2 0 0 0 701.06,174.61Z" fill="#f65a6e" stroke="#fff" stroke-width="0.9"/><path d="M716.70,175.70A160.79999999999998,160.79999999999998 0 0 1 719.33,176.68L718.04,180.04A157.2,157.2 0 0 0 715.47,179.08Z" fill="#f65a6e" stroke="#fff" stroke-width="0.9"/><path d="M719.33,176.68A160.79999999999998,160.79999999999998 0 0 1 721.94,177.71L720.59,181.05A157.2,157.2 0 0 0 718.04,180.04Z" fill="#f65a6e" stroke="#fff" stroke-width="0.9"/><path d="M734.70,183.53A160.79999999999998,160.79999999999998 0 0 1 737.25,184.85L735.56,188.03A157.2,157.2 0 0 0 733.07,186.73Z" fill="#f65a6e" stroke="#fff" stroke-width="0.9"/><path d="M737.25,184.85A160.79999999999998,160.79999999999998 0 0 1 739.78,186.23L738.03,189.38A157.2,157.2 0 0 0 735.56,188.03Z" fill="#f65a6e" stroke="#fff" stroke-width="0.9"/><path d="M739.90,186.30A160.79999999999998,160.79999999999998 0 0 1 744.52,188.97L742.66,192.05A157.2,157.2 0 0 0 738.15,189.44Z" fill="#9d4e96" stroke="#fff" stroke-width="0.9"/><path d="M744.52,188.97A160.79999999999998,160.79999999999998 0 0 1 746.91,190.43L745.00,193.49A157.2,157.2 0 0 0 742.66,192.05Z" fill="#9d4e96" stroke="#fff" stroke-width="0.9"/><path d="M746.91,190.43A160.79999999999998,160.79999999999998 0 0 1 750.06,192.45L748.08,195.46A157.2,157.2 0 0 0 745.00,193.49Z" fill="#9d4e96" stroke="#fff" stroke-width="0.9"/><path d="M750.06,192.45A160.79999999999998,160.79999999999998 0 0 1 753.16,194.55L751.12,197.51A157.2,157.2 0 0 0 748.08,195.46Z" fill="#9d4e96" stroke="#fff" stroke-width="0.9"/><path d="M753.16,194.55A160.79999999999998,160.79999999999998 0 0 1 756.22,196.71L754.10,199.62A157.2,157.2 0 0 0 751.12,197.51Z" fill="#9d4e96" stroke="#fff" stroke-width="0.9"/><path d="M760.70,200.09A160.79999999999998,160.79999999999998 0 0 1 763.33,202.19L761.06,204.98A157.2,157.2 0 0 0 758.48,202.92Z" fill="#9d4e96" stroke="#fff" stroke-width="0.9"/><path d="M763.33,202.19A160.79999999999998,160.79999999999998 0 0 1 765.92,204.34L763.58,207.09A157.2,157.2 0 0 0 761.06,204.98Z" fill="#9d4e96" stroke="#fff" stroke-width="0.9"/><path d="M765.92,204.34A160.79999999999998,160.79999999999998 0 0 1 768.46,206.55L766.07,209.25A157.2,157.2 0 0 0 763.58,207.09Z" fill="#9d4e96" stroke="#fff" stroke-width="0.9"/><path d="M768.46,206.55A160.79999999999998,160.79999999999998 0 0 1 770.95,208.82L768.51,211.46A157.2,157.2 0 0 0 766.07,209.25Z" fill="#9d4e96" stroke="#fff" stroke-width="0.9"/><path d="M770.95,208.82A160.79999999999998,160.79999999999998 0 0 1 773.40,211.13L770.90,213.72A157.2,157.2 0 0 0 768.51,211.46Z" fill="#9d4e96" stroke="#fff" stroke-width="0.9"/><path d="M773.40,211.13A160.79999999999998,160.79999999999998 0 0 1 775.40,213.10L772.86,215.64A157.2,157.2 0 0 0 770.90,213.72Z" fill="#9d4e96" stroke="#fff" stroke-width="0.9"/><path d="M775.40,213.10A160.79999999999998,160.79999999999998 0 0 1 777.86,215.60L775.26,218.09A157.2,157.2 0 0 0 772.86,215.64Z" fill="#9d4e96" stroke="#fff" stroke-width="0.9"/><path d="M777.86,215.60A160.79999999999998,160.79999999999998 0 0 1 780.25,218.17L777.60,220.60A157.2,157.2 0 0 0 775.26,218.09Z" fill="#9d4e96" stroke="#fff" stroke-width="0.9"/><path d="M780.25,218.17A160.79999999999998,160.79999999999998 0 0 1 782.13,220.25L779.44,222.64A157.2,157.2 0 0 0 777.60,220.60Z" fill="#9d4e96" stroke="#fff" stroke-width="0.9"/><path d="M782.13,220.25A160.79999999999998,160.79999999999998 0 0 1 784.58,223.08L781.83,225.40A157.2,157.2 0 0 0 779.44,222.64Z" fill="#9d4e96" stroke="#fff" stroke-width="0.9"/><path d="M784.58,223.08A160.79999999999998,160.79999999999998 0 0 1 786.96,225.97L784.15,228.23A157.2,157.2 0 0 0 781.83,225.40Z" fill="#9d4e96" stroke="#fff" stroke-width="0.9"/><path d="M786.96,225.97A160.79999999999998,160.79999999999998 0 0 1 789.27,228.91L786.42,231.10A157.2,157.2 0 0 0 784.15,228.23Z" fill="#9d4e96" stroke="#fff" stroke-width="0.9"/><path d="M789.27,228.91A160.79999999999998,160.79999999999998 0 0 1 790.96,231.15L788.07,233.29A157.2,157.2 0 0 0 786.42,231.10Z" fill="#9d4e96" stroke="#fff" stroke-width="0.9"/><path d="M790.96,231.15A160.79999999999998,160.79999999999998 0 0 1 791.62,232.06L788.72,234.18A157.2,157.2 0 0 0 788.07,233.29Z" fill="#9d4e96" stroke="#fff" stroke-width="0.9"/><path d="M791.62,232.06A160.79999999999998,160.79999999999998 0 0 1 793.50,234.68L790.55,236.75A157.2,157.2 0 0 0 788.72,234.18Z" fill="#ff7c43" stroke="#fff" stroke-width="0.9"/><path d="M793.50,234.68A160.79999999999998,160.79999999999998 0 0 1 795.32,237.35L792.33,239.35A157.2,157.2 0 0 0 790.55,236.75Z" fill="#ff7c43" stroke="#fff" stroke-width="0.9"/><path d="M795.32,237.35A160.79999999999998,160.79999999999998 0 0 1 797.09,240.05L794.06,241.99A157.2,157.2 0 0 0 792.33,239.35Z" fill="#ff7c43" stroke="#fff" stroke-width="0.9"/><path d="M797.09,240.05A160.79999999999998,160.79999999999998 0 0 1 798.80,242.78L795.74,244.66A157.2,157.2 0 0 0 794.06,241.99Z" fill="#ff7c43" stroke="#fff" stroke-width="0.9"/><path d="M798.80,242.78A160.79999999999998,160.79999999999998 0 0 1 815.71,280.56L812.26,281.59A157.2,157.2 0 0 0 795.74,244.66Z" fill="#ff7c43" stroke="#fff" stroke-width="0.9"/><path d="M815.71,280.56A160.79999999999998,160.79999999999998 0 0 1 822.41,321.40L818.81,321.52A157.2,157.2 0 0 0 812.26,281.59Z" fill="#ff7c43" stroke="#fff" stroke-width="0.9"/><path d="M822.41,321.40A160.79999999999998,160.79999999999998 0 0 1 818.47,362.60L814.96,361.79A157.2,157.2 0 0 0 818.81,321.52Z" fill="#ff7c43" stroke="#fff" stroke-width="0.9"/><path d="M818.47,362.60A160.79999999999998,160.79999999999998 0 0 1 804.14,401.42L800.95,399.75A157.2,157.2 0 0 0 814.96,361.79Z" fill="#ff7c43" stroke="#fff" stroke-width="0.9"/><path d="M804.14,401.42A160.79999999999998,160.79999999999998 0 0 1 780.37,435.31L777.72,432.88A157.2,157.2 0 0 0 800.95,399.75Z" fill="#ff7c43" stroke="#fff" stroke-width="0.9"/><path d="M780.37,435.31A160.79999999999998,160.79999999999998 0 0 1 748.75,462.00L746.80,458.97A157.2,157.2 0 0 0 777.72,432.88Z" fill="#ff7c43" stroke="#fff" stroke-width="0.9"/><path d="M748.75,462.00A160.79999999999998,160.79999999999998 0 0 1 711.36,479.74L710.24,476.32A157.2,157.2 0 0 0 746.80,458.97Z" fill="#ff7c43" stroke="#fff" stroke-width="0.9"/><path d="M711.36,479.74A160.79999999999998,160.79999999999998 0 0 1 670.68,487.35L670.48,483.75A157.2,157.2 0 0 0 710.24,476.32Z" fill="#ff7c43" stroke="#fff" stroke-width="0.9"/><path d="M670.68,487.35A160.79999999999998,160.79999999999998 0 0 1 667.87,487.48L667.73,483.88A157.2,157.2 0 0 0 670.48,483.75Z" fill="#ff7c43" stroke="#fff" stroke-width="0.9"/><path d="M667.87,487.48A160.79999999999998,160.79999999999998 0 0 1 643.05,486.51L643.46,482.94A157.2,157.2 0 0 0 667.73,483.88Z" fill="#ff7c43" stroke="#fff" stroke-width="0.9"/><path d="M643.05,486.51A160.79999999999998,160.79999999999998 0 0 1 618.67,481.73L619.63,478.27A157.2,157.2 0 0 0 643.46,482.94Z" fill="#ff7c43" stroke="#fff" stroke-width="0.9"/><path d="M618.67,481.73A160.79999999999998,160.79999999999998 0 0 1 595.31,473.26L596.80,469.98A157.2,157.2 0 0 0 619.63,478.27Z" fill="#ff7c43" stroke="#fff" stroke-width="0.9"/><path d="M595.31,473.26A160.79999999999998,160.79999999999998 0 0 1 573.54,461.28L575.52,458.27A157.2,157.2 0 0 0 596.80,469.98Z" fill="#ff7c43" stroke="#fff" stroke-width="0.9"/><path d="M573.54,461.28A160.79999999999998,160.79999999999998 0 0 1 553.88,446.10L556.29,443.42A157.2,157.2 0 0 0 575.52,458.27Z" fill="#ff7c43" stroke="#fff" stroke-width="0.9"/><path d="M553.88,446.10A160.79999999999998,160.79999999999998 0 0 1 536.79,428.06L539.59,425.79A157.2,157.2 0 0 0 556.29,443.42Z" fill="#ff7c43" stroke="#fff" stroke-width="0.9"/><path d="M536.79,428.06A160.79999999999998,160.79999999999998 0 0 1 522.68,407.61L525.79,405.80A157.2,157.2 0 0 0 539.59,425.79Z" fill="#ff7c43" stroke="#fff" stroke-width="0.9"/><path d="M522.68,407.61A160.79999999999998,160.79999999999998 0 0 1 511.89,385.23L515.25,383.92A157.2,157.2 0 0 0 525.79,405.80Z" fill="#ff7c43" stroke="#fff" stroke-width="0.9"/><path d="M511.89,385.23A160.79999999999998,160.79999999999998 0 0 1 504.68,361.46L508.19,360.68A157.2,157.2 0 0 0 515.25,383.92Z" fill="#ff7c43" stroke="#fff" stroke-width="0.9"/><path d="M504.68,361.46A160.79999999999998,160.79999999999998 0 0 1 501.21,336.85L504.81,336.63A157.2,157.2 0 0 0 508.19,360.68Z" fill="#ff7c43" stroke="#fff" stroke-width="0.9"/><path d="M501.21,336.85A160.79999999999998,160.79999999999998 0 0 1 501.58,312.01L505.17,312.34A157.2,157.2 0 0 0 504.81,336.63Z" fill="#ff7c43" stroke="#fff" stroke-width="0.9"/><path d="M501.58,312.01A160.79999999999998,160.79999999999998 0 0 1 505.77,287.52L509.26,288.40A157.2,157.2 0 0 0 505.17,312.34Z" fill="#ff7c43" stroke="#fff" stroke-width="0.9"/><path d="M505.77,287.52A160.79999999999998,160.79999999999998 0 0 1 513.68,263.97L517.00,265.38A157.2,157.2 0 0 0 509.26,288.40Z" fill="#ff7c43" stroke="#fff" stroke-width="0.9"/><path d="M513.68,263.97A160.79999999999998,160.79999999999998 0 0 1 515.38,260.12L518.65,261.61A157.2,157.2 0 0 0 517.00,265.38Z" fill="#ff7c43" stroke="#fff" stroke-width="0.9"/><path d="M515.38,260.12A160.79999999999998,160.79999999999998 0 0 1 529.34,235.49L532.30,237.53A157.2,157.2 0 0 0 518.65,261.61Z" fill="#ff7c43" stroke="#fff" stroke-width="0.9"/><path d="M526.38,233.45A164.39999999999998,164.39999999999998 0 0 1 528.74,230.11L531.65,232.23A160.79999999999998,160.79999999999998 0 0 0 529.34,235.49Z" fill="#635091" stroke="#fff" stroke-width="0.9"/><path d="M528.74,230.11A164.39999999999998,164.39999999999998 0 0 1 531.19,226.83L534.04,229.02A160.79999999999998,160.79999999999998 0 0 0 531.65,232.23Z" fill="#635091" stroke="#fff" stroke-width="0.9"/><path d="M637.40,164.21A164.39999999999998,164.39999999999998 0 0 1 640.24,163.81L640.71,167.38A160.79999999999998,160.79999999999998 0 0 0 637.93,167.77Z" fill="#635091" stroke="#fff" stroke-width="0.9"/><path d="M653.10,162.63A164.39999999999998,164.39999999999998 0 0 1 655.96,162.50L656.09,166.10A160.79999999999998,160.79999999999998 0 0 0 653.28,166.22Z" fill="#635091" stroke="#fff" stroke-width="0.9"/><path d="M667.44,162.50A164.39999999999998,164.39999999999998 0 0 1 670.30,162.63L670.12,166.22A160.79999999999998,160.79999999999998 0 0 0 667.31,166.10Z" fill="#d04c8c" stroke="#fff" stroke-width="0.9"/><path d="M673.74,162.84A164.39999999999998,164.39999999999998 0 0 1 676.60,163.08L676.27,166.66A160.79999999999998,160.79999999999998 0 0 0 673.48,166.43Z" fill="#d04c8c" stroke="#fff" stroke-width="0.9"/><path d="M746.37,185.88A164.39999999999998,164.39999999999998 0 0 1 748.82,187.38L746.91,190.43A160.79999999999998,160.79999999999998 0 0 0 744.52,188.97Z" fill="#9d4e96" stroke="#fff" stroke-width="0.9"/><path d="M775.90,208.54A164.39999999999998,164.39999999999998 0 0 1 777.95,210.55L775.40,213.10A160.79999999999998,160.79999999999998 0 0 0 773.40,211.13Z" fill="#9d4e96" stroke="#fff" stroke-width="0.9"/><path d="M782.91,215.73A164.39999999999998,164.39999999999998 0 0 1 784.83,217.87L782.13,220.25A160.79999999999998,160.79999999999998 0 0 0 780.25,218.17Z" fill="#9d4e96" stroke="#fff" stroke-width="0.9"/><path d="M792.13,226.72A164.39999999999998,164.39999999999998 0 0 1 793.85,229.01L790.96,231.15A160.79999999999998,160.79999999999998 0 0 0 789.27,228.91Z" fill="#9d4e96" stroke="#fff" stroke-width="0.9"/><path d="M801.87,240.90A164.39999999999998,164.39999999999998 0 0 1 803.35,243.36L800.25,245.19A160.79999999999998,160.79999999999998 0 0 0 798.80,242.78Z" fill="#ff7c43" stroke="#fff" stroke-width="0.9"/><path d="M803.35,243.36A164.39999999999998,164.39999999999998 0 0 1 823.85,299.67L820.29,300.26A160.79999999999998,160.79999999999998 0 0 0 800.25,245.19Z" fill="#ff7c43" stroke="#fff" stroke-width="0.9"/><path d="M823.85,299.67A164.39999999999998,164.39999999999998 0 0 1 824.29,302.50L820.73,303.03A160.79999999999998,160.79999999999998 0 0 0 820.29,300.26Z" fill="#ff7c43" stroke="#fff" stroke-width="0.9"/><path d="M824.29,302.50A164.39999999999998,164.39999999999998 0 0 1 824.69,305.34L821.12,305.81A160.79999999999998,160.79999999999998 0 0 0 820.73,303.03Z" fill="#ff7c43" stroke="#fff" stroke-width="0.9"/><path d="M824.69,305.34A164.39999999999998,164.39999999999998 0 0 1 825.87,318.20L822.28,318.38A160.79999999999998,160.79999999999998 0 0 0 821.12,305.81Z" fill="#ff7c43" stroke="#fff" stroke-width="0.9"/><path d="M825.87,318.20A164.39999999999998,164.39999999999998 0 0 1 826.06,323.36L822.46,323.43A160.79999999999998,160.79999999999998 0 0 0 822.28,318.38Z" fill="#ff7c43" stroke="#fff" stroke-width="0.9"/><path d="M826.06,323.36A164.39999999999998,164.39999999999998 0 0 1 824.26,351.32L820.70,350.78A160.79999999999998,160.79999999999998 0 0 0 822.46,323.43Z" fill="#ff7c43" stroke="#fff" stroke-width="0.9"/><path d="M824.26,351.32A164.39999999999998,164.39999999999998 0 0 1 817.74,378.57L814.32,377.44A160.79999999999998,160.79999999999998 0 0 0 820.70,350.78Z" fill="#ff7c43" stroke="#fff" stroke-width="0.9"/><path d="M817.74,378.57A164.39999999999998,164.39999999999998 0 0 1 806.68,404.32L803.50,402.62A160.79999999999998,160.79999999999998 0 0 0 814.32,377.44Z" fill="#ff7c43" stroke="#fff" stroke-width="0.9"/><path d="M806.68,404.32A164.39999999999998,164.39999999999998 0 0 1 791.41,427.81L788.57,425.60A160.79999999999998,160.79999999999998 0 0 0 803.50,402.62Z" fill="#ff7c43" stroke="#fff" stroke-width="0.9"/><path d="M791.41,427.81A164.39999999999998,164.39999999999998 0 0 1 772.37,448.37L769.94,445.71A160.79999999999998,160.79999999999998 0 0 0 788.57,425.60Z" fill="#ff7c43" stroke="#fff" stroke-width="0.9"/><path d="M772.37,448.37A164.39999999999998,164.39999999999998 0 0 1 750.11,465.40L748.18,462.37A160.79999999999998,160.79999999999998 0 0 0 769.94,445.71Z" fill="#ff7c43" stroke="#fff" stroke-width="0.9"/><path d="M750.11,465.40A164.39999999999998,164.39999999999998 0 0 1 725.29,478.40L723.90,475.08A160.79999999999998,160.79999999999998 0 0 0 748.18,462.37Z" fill="#ff7c43" stroke="#fff" stroke-width="0.9"/><path d="M725.29,478.40A164.39999999999998,164.39999999999998 0 0 1 698.62,487.00L697.81,483.49A160.79999999999998,160.79999999999998 0 0 0 723.90,475.08Z" fill="#ff7c43" stroke="#fff" stroke-width="0.9"/><path d="M698.62,487.00A164.39999999999998,164.39999999999998 0 0 1 670.88,490.94L670.68,487.35A160.79999999999998,160.79999999999998 0 0 0 697.81,483.49Z" fill="#ff7c43" stroke="#fff" stroke-width="0.9"/><path d="M668.01,491.08A164.39999999999998,164.39999999999998 0 0 1 635.08,489.03L635.66,485.48A160.79999999999998,160.79999999999998 0 0 0 667.87,487.48Z" fill="#ff7c43" stroke="#fff" stroke-width="0.9"/><path d="M635.08,489.03A164.39999999999998,164.39999999999998 0 0 1 603.21,480.44L604.49,477.08A160.79999999999998,160.79999999999998 0 0 0 635.66,485.48Z" fill="#ff7c43" stroke="#fff" stroke-width="0.9"/><path d="M603.21,480.44A164.39999999999998,164.39999999999998 0 0 1 573.71,465.67L575.63,462.63A160.79999999999998,160.79999999999998 0 0 0 604.49,477.08Z" fill="#ff7c43" stroke="#fff" stroke-width="0.9"/><path d="M573.71,465.67A164.39999999999998,164.39999999999998 0 0 1 547.75,445.30L550.24,442.70A160.79999999999998,160.79999999999998 0 0 0 575.63,462.63Z" fill="#ff7c43" stroke="#fff" stroke-width="0.9"/><path d="M547.75,445.30A164.39999999999998,164.39999999999998 0 0 1 526.38,420.15L529.34,418.11A160.79999999999998,160.79999999999998 0 0 0 550.24,442.70Z" fill="#ff7c43" stroke="#fff" stroke-width="0.9"/><path d="M526.38,420.15A164.39999999999998,164.39999999999998 0 0 1 510.46,391.25L513.77,389.84A160.79999999999998,160.79999999999998 0 0 0 529.34,418.11Z" fill="#ff7c43" stroke="#fff" stroke-width="0.9"/><path d="M510.46,391.25A164.39999999999998,164.39999999999998 0 0 1 500.63,359.74L504.16,359.02A160.79999999999998,160.79999999999998 0 0 0 513.77,389.84Z" fill="#ff7c43" stroke="#fff" stroke-width="0.9"/><path d="M500.63,359.74A164.39999999999998,164.39999999999998 0 0 1 497.30,326.91L500.90,326.91A160.79999999999998,160.79999999999998 0 0 0 504.16,359.02Z" fill="#ff7c43" stroke="#fff" stroke-width="0.9"/><path d="M497.30,326.91A164.39999999999998,164.39999999999998 0 0 1 500.59,294.08L504.12,294.80A160.79999999999998,160.79999999999998 0 0 0 500.90,326.91Z" fill="#ff7c43" stroke="#fff" stroke-width="0.9"/><path d="M500.59,294.08A164.39999999999998,164.39999999999998 0 0 1 510.37,262.56L513.68,263.97A160.79999999999998,160.79999999999998 0 0 0 504.12,294.80Z" fill="#ff7c43" stroke="#fff" stroke-width="0.9"/><path d="M512.10,258.62A164.39999999999998,164.39999999999998 0 0 1 526.29,233.56L529.26,235.61A160.79999999999998,160.79999999999998 0 0 0 515.38,260.12Z" fill="#ff7c43" stroke="#fff" stroke-width="0.9"/><path d="M806.45,241.53A167.99999999999997,167.99999999999997 0 0 1 808.64,245.35L805.49,247.10A164.39999999999998,164.39999999999998 0 0 0 803.35,243.36Z" fill="#ff7c43" stroke="#fff" stroke-width="0.9"/><path d="M808.64,245.35A167.99999999999997,167.99999999999997 0 0 1 827.37,298.93L823.82,299.52A164.39999999999998,164.39999999999998 0 0 0 805.49,247.10Z" fill="#ff7c43" stroke="#fff" stroke-width="0.9"/><path d="M828.26,304.87A167.99999999999997,167.99999999999997 0 0 1 829.47,318.01L825.87,318.20A164.39999999999998,164.39999999999998 0 0 0 824.69,305.34Z" fill="#ff7c43" stroke="#fff" stroke-width="0.9"/><path d="M829.66,323.28A167.99999999999997,167.99999999999997 0 0 1 818.54,387.01L815.18,385.72A164.39999999999998,164.39999999999998 0 0 0 826.06,323.36Z" fill="#ff7c43" stroke="#fff" stroke-width="0.9"/><path d="M818.54,387.01A167.99999999999997,167.99999999999997 0 0 1 816.57,391.90L813.25,390.51A164.39999999999998,164.39999999999998 0 0 0 815.18,385.72Z" fill="#ff7c43" stroke="#fff" stroke-width="0.9"/><path d="M816.57,391.90A167.99999999999997,167.99999999999997 0 0 1 782.28,443.78L779.69,441.28A164.39999999999998,164.39999999999998 0 0 0 813.25,390.51Z" fill="#ff7c43" stroke="#fff" stroke-width="0.9"/><path d="M782.28,443.78A167.99999999999997,167.99999999999997 0 0 1 731.46,479.63L729.96,476.36A164.39999999999998,164.39999999999998 0 0 0 779.69,441.28Z" fill="#ff7c43" stroke="#fff" stroke-width="0.9"/><path d="M731.46,479.63A167.99999999999997,167.99999999999997 0 0 1 671.08,494.54L670.88,490.94A164.39999999999998,164.39999999999998 0 0 0 729.96,476.36Z" fill="#ff7c43" stroke="#fff" stroke-width="0.9"/><path d="M668.15,494.68A167.99999999999997,167.99999999999997 0 0 1 642.21,493.67L642.63,490.09A164.39999999999998,164.39999999999998 0 0 0 668.01,491.08Z" fill="#ff7c43" stroke="#fff" stroke-width="0.9"/><path d="M642.21,493.67A167.99999999999997,167.99999999999997 0 0 1 616.74,488.67L617.70,485.20A164.39999999999998,164.39999999999998 0 0 0 642.63,490.09Z" fill="#ff7c43" stroke="#fff" stroke-width="0.9"/><path d="M616.74,488.67A167.99999999999997,167.99999999999997 0 0 1 592.34,479.81L593.83,476.53A164.39999999999998,164.39999999999998 0 0 0 617.70,485.20Z" fill="#ff7c43" stroke="#fff" stroke-width="0.9"/><path d="M592.34,479.81A167.99999999999997,167.99999999999997 0 0 1 569.60,467.30L571.57,464.29A164.39999999999998,164.39999999999998 0 0 0 593.83,476.53Z" fill="#ff7c43" stroke="#fff" stroke-width="0.9"/><path d="M569.60,467.30A167.99999999999997,167.99999999999997 0 0 1 549.05,451.44L551.47,448.77A164.39999999999998,164.39999999999998 0 0 0 571.57,464.29Z" fill="#ff7c43" stroke="#fff" stroke-width="0.9"/><path d="M549.05,451.44A167.99999999999997,167.99999999999997 0 0 1 531.20,432.60L533.99,430.33A164.39999999999998,164.39999999999998 0 0 0 551.47,448.77Z" fill="#ff7c43" stroke="#fff" stroke-width="0.9"/><path d="M531.20,432.60A167.99999999999997,167.99999999999997 0 0 1 516.46,411.23L519.57,409.42A164.39999999999998,164.39999999999998 0 0 0 533.99,430.33Z" fill="#ff7c43" stroke="#fff" stroke-width="0.9"/><path d="M516.46,411.23A167.99999999999997,167.99999999999997 0 0 1 505.18,387.85L508.54,386.54A164.39999999999998,164.39999999999998 0 0 0 519.57,409.42Z" fill="#ff7c43" stroke="#fff" stroke-width="0.9"/><path d="M505.18,387.85A167.99999999999997,167.99999999999997 0 0 1 497.65,363.01L501.16,362.23A164.39999999999998,164.39999999999998 0 0 0 508.54,386.54Z" fill="#ff7c43" stroke="#fff" stroke-width="0.9"/><path d="M497.65,363.01A167.99999999999997,167.99999999999997 0 0 1 494.03,337.30L497.62,337.08A164.39999999999998,164.39999999999998 0 0 0 501.16,362.23Z" fill="#ff7c43" stroke="#fff" stroke-width="0.9"/><path d="M494.03,337.30A167.99999999999997,167.99999999999997 0 0 1 494.41,311.35L498.00,311.68A164.39999999999998,164.39999999999998 0 0 0 497.62,337.08Z" fill="#ff7c43" stroke="#fff" stroke-width="0.9"/><path d="M494.41,311.35A167.99999999999997,167.99999999999997 0 0 1 498.79,285.76L502.28,286.64A164.39999999999998,164.39999999999998 0 0 0 498.00,311.68Z" fill="#ff7c43" stroke="#fff" stroke-width="0.9"/><path d="M498.79,285.76A167.99999999999997,167.99999999999997 0 0 1 507.06,261.16L510.37,262.56A164.39999999999998,164.39999999999998 0 0 0 502.28,286.64Z" fill="#ff7c43" stroke="#fff" stroke-width="0.9"/><path d="M508.83,257.13A167.99999999999997,167.99999999999997 0 0 1 517.70,240.27L520.78,242.13A164.39999999999998,164.39999999999998 0 0 0 512.10,258.62Z" fill="#ff7c43" stroke="#fff" stroke-width="0.9"/><path d="M517.70,240.27A167.99999999999997,167.99999999999997 0 0 1 519.51,237.32L522.56,239.24A164.39999999999998,164.39999999999998 0 0 0 520.78,242.13Z" fill="#ff7c43" stroke="#fff" stroke-width="0.9"/><path d="M519.51,237.32A167.99999999999997,167.99999999999997 0 0 1 521.39,234.40L524.40,236.38A164.39999999999998,164.39999999999998 0 0 0 522.56,239.24Z" fill="#ff7c43" stroke="#fff" stroke-width="0.9"/><path d="M521.39,234.40A167.99999999999997,167.99999999999997 0 0 1 523.33,231.52L526.29,233.56A164.39999999999998,164.39999999999998 0 0 0 524.40,236.38Z" fill="#ff7c43" stroke="#fff" stroke-width="0.9"/><path d="M811.78,243.61A171.6,171.6 0 0 1 813.63,247.03L810.45,248.71A168.0,168.0 0 0 0 808.64,245.35Z" fill="#ff7c43" stroke="#fff" stroke-width="0.9"/><path d="M813.63,247.03A171.6,171.6 0 0 1 829.55,291.12L826.03,291.87A168.0,168.0 0 0 0 810.45,248.71Z" fill="#ff7c43" stroke="#fff" stroke-width="0.9"/><path d="M829.55,291.12A171.6,171.6 0 0 1 830.27,294.72L826.74,295.39A168.0,168.0 0 0 0 826.03,291.87Z" fill="#ff7c43" stroke="#fff" stroke-width="0.9"/><path d="M830.27,294.72A171.6,171.6 0 0 1 830.92,298.33L827.37,298.93A168.0,168.0 0 0 0 826.74,295.39Z" fill="#ff7c43" stroke="#fff" stroke-width="0.9"/><path d="M831.83,304.40A171.6,171.6 0 0 1 832.65,311.84L829.06,312.16A168.0,168.0 0 0 0 828.26,304.87Z" fill="#ff7c43" stroke="#fff" stroke-width="0.9"/><path d="M832.65,311.84A171.6,171.6 0 0 1 832.88,314.83L829.29,315.08A168.0,168.0 0 0 0 829.06,312.16Z" fill="#ff7c43" stroke="#fff" stroke-width="0.9"/><path d="M832.88,314.83A171.6,171.6 0 0 1 833.06,317.82L829.47,318.01A168.0,168.0 0 0 0 829.29,315.08Z" fill="#ff7c43" stroke="#fff" stroke-width="0.9"/><path d="M833.26,323.21A171.6,171.6 0 0 1 829.23,363.94L825.72,363.16A168.0,168.0 0 0 0 829.66,323.28Z" fill="#ff7c43" stroke="#fff" stroke-width="0.9"/><path d="M829.23,363.94A171.6,171.6 0 0 1 828.41,367.46L824.92,366.61A168.0,168.0 0 0 0 825.72,363.16Z" fill="#ff7c43" stroke="#fff" stroke-width="0.9"/><path d="M828.41,367.46A171.6,171.6 0 0 1 827.52,370.97L824.04,370.04A168.0,168.0 0 0 0 824.92,366.61Z" fill="#ff7c43" stroke="#fff" stroke-width="0.9"/><path d="M827.52,370.97A171.6,171.6 0 0 1 826.55,374.45L823.09,373.45A168.0,168.0 0 0 0 824.04,370.04Z" fill="#ff7c43" stroke="#fff" stroke-width="0.9"/><path d="M826.55,374.45A171.6,171.6 0 0 1 825.51,377.91L822.07,376.84A168.0,168.0 0 0 0 823.09,373.45Z" fill="#ff7c43" stroke="#fff" stroke-width="0.9"/><path d="M825.51,377.91A171.6,171.6 0 0 1 824.40,381.35L820.99,380.21A168.0,168.0 0 0 0 822.07,376.84Z" fill="#ff7c43" stroke="#fff" stroke-width="0.9"/><path d="M824.40,381.35A171.6,171.6 0 0 1 823.21,384.77L819.82,383.55A168.0,168.0 0 0 0 820.99,380.21Z" fill="#ff7c43" stroke="#fff" stroke-width="0.9"/><path d="M823.21,384.77A171.6,171.6 0 0 1 821.96,388.16L818.59,386.87A168.0,168.0 0 0 0 819.82,383.55Z" fill="#ff7c43" stroke="#fff" stroke-width="0.9"/><path d="M819.89,393.30A171.6,171.6 0 0 1 817.85,397.96L814.57,396.47A168.0,168.0 0 0 0 816.57,391.90Z" fill="#ff7c43" stroke="#fff" stroke-width="0.9"/><path d="M817.85,397.96A171.6,171.6 0 0 1 799.64,428.87L796.75,426.73A168.0,168.0 0 0 0 814.57,396.47Z" fill="#ff7c43" stroke="#fff" stroke-width="0.9"/><path d="M799.64,428.87A171.6,171.6 0 0 1 775.41,455.32L773.02,452.62A168.0,168.0 0 0 0 796.75,426.73Z" fill="#ff7c43" stroke="#fff" stroke-width="0.9"/><path d="M775.41,455.32A171.6,171.6 0 0 1 772.57,457.77L770.25,455.02A168.0,168.0 0 0 0 773.02,452.62Z" fill="#ff7c43" stroke="#fff" stroke-width="0.9"/><path d="M772.57,457.77A171.6,171.6 0 0 1 769.69,460.16L767.43,457.36A168.0,168.0 0 0 0 770.25,455.02Z" fill="#ff7c43" stroke="#fff" stroke-width="0.9"/><path d="M769.69,460.16A171.6,171.6 0 0 1 766.76,462.48L764.55,459.64A168.0,168.0 0 0 0 767.43,457.36Z" fill="#ff7c43" stroke="#fff" stroke-width="0.9"/><path d="M766.76,462.48A171.6,171.6 0 0 1 763.77,464.74L761.63,461.85A168.0,168.0 0 0 0 764.55,459.64Z" fill="#ff7c43" stroke="#fff" stroke-width="0.9"/><path d="M763.77,464.74A171.6,171.6 0 0 1 760.74,466.94L758.66,464.00A168.0,168.0 0 0 0 761.63,461.85Z" fill="#ff7c43" stroke="#fff" stroke-width="0.9"/><path d="M760.74,466.94A171.6,171.6 0 0 1 757.66,469.06L755.64,466.08A168.0,168.0 0 0 0 758.66,464.00Z" fill="#ff7c43" stroke="#fff" stroke-width="0.9"/><path d="M757.66,469.06A171.6,171.6 0 0 1 747.50,475.41L745.70,472.29A168.0,168.0 0 0 0 755.64,466.08Z" fill="#ff7c43" stroke="#fff" stroke-width="0.9"/><path d="M747.50,475.41A171.6,171.6 0 0 1 744.02,477.37L742.29,474.21A168.0,168.0 0 0 0 745.70,472.29Z" fill="#ff7c43" stroke="#fff" stroke-width="0.9"/><path d="M744.02,477.37A171.6,171.6 0 0 1 740.49,479.24L738.84,476.04A168.0,168.0 0 0 0 742.29,474.21Z" fill="#ff7c43" stroke="#fff" stroke-width="0.9"/><path d="M740.49,479.24A171.6,171.6 0 0 1 736.92,481.03L735.35,477.80A168.0,168.0 0 0 0 738.84,476.04Z" fill="#ff7c43" stroke="#fff" stroke-width="0.9"/><path d="M736.92,481.03A171.6,171.6 0 0 1 704.96,492.86L704.05,489.38A168.0,168.0 0 0 0 735.35,477.80Z" fill="#ff7c43" stroke="#fff" stroke-width="0.9"/><path d="M704.96,492.86A171.6,171.6 0 0 1 671.28,498.13L671.08,494.54A168.0,168.0 0 0 0 704.05,489.38Z" fill="#ff7c43" stroke="#fff" stroke-width="0.9"/><path d="M668.29,498.27A171.6,171.6 0 0 1 664.69,498.37L664.63,494.77A168.0,168.0 0 0 0 668.15,494.68Z" fill="#ff7c43" stroke="#fff" stroke-width="0.9"/><path d="M664.69,498.37A171.6,171.6 0 0 1 661.10,498.40L661.11,494.80A168.0,168.0 0 0 0 664.63,494.77Z" fill="#ff7c43" stroke="#fff" stroke-width="0.9"/><path d="M661.10,498.40A171.6,171.6 0 0 1 657.51,498.35L657.60,494.75A168.0,168.0 0 0 0 661.11,494.80Z" fill="#ff7c43" stroke="#fff" stroke-width="0.9"/><path d="M657.51,498.35A171.6,171.6 0 0 1 653.92,498.22L654.08,494.63A168.0,168.0 0 0 0 657.60,494.75Z" fill="#ff7c43" stroke="#fff" stroke-width="0.9"/><path d="M653.92,498.22A171.6,171.6 0 0 1 650.33,498.02L650.57,494.43A168.0,168.0 0 0 0 654.08,494.63Z" fill="#ff7c43" stroke="#fff" stroke-width="0.9"/><path d="M650.33,498.02A171.6,171.6 0 0 1 646.74,497.75L647.06,494.16A168.0,168.0 0 0 0 650.57,494.43Z" fill="#ff7c43" stroke="#fff" stroke-width="0.9"/><path d="M646.74,497.75A171.6,171.6 0 0 1 643.17,497.40L643.56,493.82A168.0,168.0 0 0 0 647.06,494.16Z" fill="#ff7c43" stroke="#fff" stroke-width="0.9"/><path d="M643.17,497.40A171.6,171.6 0 0 1 639.60,496.97L640.06,493.40A168.0,168.0 0 0 0 643.56,493.82Z" fill="#ff7c43" stroke="#fff" stroke-width="0.9"/><path d="M639.60,496.97A171.6,171.6 0 0 1 636.04,496.47L636.58,492.91A168.0,168.0 0 0 0 640.06,493.40Z" fill="#ff7c43" stroke="#fff" stroke-width="0.9"/><path d="M636.04,496.47A171.6,171.6 0 0 1 632.49,495.90L633.10,492.35A168.0,168.0 0 0 0 636.58,492.91Z" fill="#ff7c43" stroke="#fff" stroke-width="0.9"/><path d="M632.49,495.90A171.6,171.6 0 0 1 628.96,495.25L629.64,491.71A168.0,168.0 0 0 0 633.10,492.35Z" fill="#ff7c43" stroke="#fff" stroke-width="0.9"/><path d="M628.96,495.25A171.6,171.6 0 0 1 625.44,494.52L626.20,491.01A168.0,168.0 0 0 0 629.64,491.71Z" fill="#ff7c43" stroke="#fff" stroke-width="0.9"/><path d="M625.44,494.52A171.6,171.6 0 0 1 621.93,493.73L622.77,490.23A168.0,168.0 0 0 0 626.20,491.01Z" fill="#ff7c43" stroke="#fff" stroke-width="0.9"/><path d="M621.93,493.73A171.6,171.6 0 0 1 618.44,492.86L619.35,489.38A168.0,168.0 0 0 0 622.77,490.23Z" fill="#ff7c43" stroke="#fff" stroke-width="0.9"/><path d="M618.44,492.86A171.6,171.6 0 0 1 614.98,491.92L615.96,488.45A168.0,168.0 0 0 0 619.35,489.38Z" fill="#ff7c43" stroke="#fff" stroke-width="0.9"/><path d="M614.98,491.92A171.6,171.6 0 0 1 611.53,490.90L612.58,487.46A168.0,168.0 0 0 0 615.96,488.45Z" fill="#ff7c43" stroke="#fff" stroke-width="0.9"/><path d="M611.53,490.90A171.6,171.6 0 0 1 608.10,489.82L609.23,486.40A168.0,168.0 0 0 0 612.58,487.46Z" fill="#ff7c43" stroke="#fff" stroke-width="0.9"/><path d="M608.10,489.82A171.6,171.6 0 0 1 604.70,488.66L605.90,485.26A168.0,168.0 0 0 0 609.23,486.40Z" fill="#ff7c43" stroke="#fff" stroke-width="0.9"/><path d="M604.70,488.66A171.6,171.6 0 0 1 601.32,487.43L602.59,484.06A168.0,168.0 0 0 0 605.90,485.26Z" fill="#ff7c43" stroke="#fff" stroke-width="0.9"/><path d="M601.32,487.43A171.6,171.6 0 0 1 597.97,486.13L599.31,482.79A168.0,168.0 0 0 0 602.59,484.06Z" fill="#ff7c43" stroke="#fff" stroke-width="0.9"/><path d="M597.97,486.13A171.6,171.6 0 0 1 594.65,484.76L596.06,481.44A168.0,168.0 0 0 0 599.31,482.79Z" fill="#ff7c43" stroke="#fff" stroke-width="0.9"/><path d="M594.65,484.76A171.6,171.6 0 0 1 591.36,483.32L592.83,480.04A168.0,168.0 0 0 0 596.06,481.44Z" fill="#ff7c43" stroke="#fff" stroke-width="0.9"/><path d="M591.36,483.32A171.6,171.6 0 0 1 588.09,481.81L589.64,478.56A168.0,168.0 0 0 0 592.83,480.04Z" fill="#ff7c43" stroke="#fff" stroke-width="0.9"/><path d="M588.09,481.81A171.6,171.6 0 0 1 584.86,480.24L586.48,477.02A168.0,168.0 0 0 0 589.64,478.56Z" fill="#ff7c43" stroke="#fff" stroke-width="0.9"/><path d="M584.86,480.24A171.6,171.6 0 0 1 581.67,478.59L583.35,475.41A168.0,168.0 0 0 0 586.48,477.02Z" fill="#ff7c43" stroke="#fff" stroke-width="0.9"/><path d="M581.67,478.59A171.6,171.6 0 0 1 578.51,476.88L580.25,473.74A168.0,168.0 0 0 0 583.35,475.41Z" fill="#ff7c43" stroke="#fff" stroke-width="0.9"/><path d="M578.51,476.88A171.6,171.6 0 0 1 575.38,475.11L577.19,472.00A168.0,168.0 0 0 0 580.25,473.74Z" fill="#ff7c43" stroke="#fff" stroke-width="0.9"/><path d="M575.38,475.11A171.6,171.6 0 0 1 572.29,473.27L574.17,470.20A168.0,168.0 0 0 0 577.19,472.00Z" fill="#ff7c43" stroke="#fff" stroke-width="0.9"/><path d="M572.29,473.27A171.6,171.6 0 0 1 569.25,471.36L571.19,468.33A168.0,168.0 0 0 0 574.17,470.20Z" fill="#ff7c43" stroke="#fff" stroke-width="0.9"/><path d="M569.25,471.36A171.6,171.6 0 0 1 566.24,469.40L568.24,466.41A168.0,168.0 0 0 0 571.19,468.33Z" fill="#ff7c43" stroke="#fff" stroke-width="0.9"/><path d="M566.24,469.40A171.6,171.6 0 0 1 563.27,467.37L565.34,464.42A168.0,168.0 0 0 0 568.24,466.41Z" fill="#ff7c43" stroke="#fff" stroke-width="0.9"/><path d="M563.27,467.37A171.6,171.6 0 0 1 560.35,465.27L562.48,462.37A168.0,168.0 0 0 0 565.34,464.42Z" fill="#ff7c43" stroke="#fff" stroke-width="0.9"/><path d="M560.35,465.27A171.6,171.6 0 0 1 557.47,463.12L559.66,460.26A168.0,168.0 0 0 0 562.48,462.37Z" fill="#ff7c43" stroke="#fff" stroke-width="0.9"/><path d="M557.47,463.12A171.6,171.6 0 0 1 554.64,460.91L556.89,458.10A168.0,168.0 0 0 0 559.66,460.26Z" fill="#ff7c43" stroke="#fff" stroke-width="0.9"/><path d="M554.64,460.91A171.6,171.6 0 0 1 551.86,458.64L554.16,455.87A168.0,168.0 0 0 0 556.89,458.10Z" fill="#ff7c43" stroke="#fff" stroke-width="0.9"/><path d="M551.86,458.64A171.6,171.6 0 0 1 549.12,456.31L551.48,453.59A168.0,168.0 0 0 0 554.16,455.87Z" fill="#ff7c43" stroke="#fff" stroke-width="0.9"/><path d="M549.12,456.31A171.6,171.6 0 0 1 531.21,438.25L533.95,435.91A168.0,168.0 0 0 0 551.48,453.59Z" fill="#ff7c43" stroke="#fff" stroke-width="0.9"/><path d="M531.21,438.25A171.6,171.6 0 0 1 528.93,435.52L531.72,433.24A168.0,168.0 0 0 0 533.95,435.91Z" fill="#ff7c43" stroke="#fff" stroke-width="0.9"/><path d="M528.93,435.52A171.6,171.6 0 0 1 526.71,432.74L529.54,430.52A168.0,168.0 0 0 0 531.72,433.24Z" fill="#ff7c43" stroke="#fff" stroke-width="0.9"/><path d="M526.71,432.74A171.6,171.6 0 0 1 524.54,429.92L527.42,427.76A168.0,168.0 0 0 0 529.54,430.52Z" fill="#ff7c43" stroke="#fff" stroke-width="0.9"/><path d="M524.54,429.92A171.6,171.6 0 0 1 522.43,427.06L525.36,424.95A168.0,168.0 0 0 0 527.42,427.76Z" fill="#ff7c43" stroke="#fff" stroke-width="0.9"/><path d="M522.43,427.06A171.6,171.6 0 0 1 520.39,424.15L523.35,422.11A168.0,168.0 0 0 0 525.36,424.95Z" fill="#ff7c43" stroke="#fff" stroke-width="0.9"/><path d="M520.39,424.15A171.6,171.6 0 0 1 518.40,421.20L521.41,419.22A168.0,168.0 0 0 0 523.35,422.11Z" fill="#ff7c43" stroke="#fff" stroke-width="0.9"/><path d="M518.40,421.20A171.6,171.6 0 0 1 516.47,418.21L519.52,416.29A168.0,168.0 0 0 0 521.41,419.22Z" fill="#ff7c43" stroke="#fff" stroke-width="0.9"/><path d="M516.47,418.21A171.6,171.6 0 0 1 514.61,415.18L517.70,413.33A168.0,168.0 0 0 0 519.52,416.29Z" fill="#ff7c43" stroke="#fff" stroke-width="0.9"/><path d="M514.61,415.18A171.6,171.6 0 0 1 512.81,412.11L515.93,410.32A168.0,168.0 0 0 0 517.70,413.33Z" fill="#ff7c43" stroke="#fff" stroke-width="0.9"/><path d="M512.81,412.11A171.6,171.6 0 0 1 511.07,409.01L514.23,407.28A168.0,168.0 0 0 0 515.93,410.32Z" fill="#ff7c43" stroke="#fff" stroke-width="0.9"/><path d="M511.07,409.01A171.6,171.6 0 0 1 509.40,405.87L512.60,404.21A168.0,168.0 0 0 0 514.23,407.28Z" fill="#ff7c43" stroke="#fff" stroke-width="0.9"/><path d="M509.40,405.87A171.6,171.6 0 0 1 507.80,402.70L511.03,401.10A168.0,168.0 0 0 0 512.60,404.21Z" fill="#ff7c43" stroke="#fff" stroke-width="0.9"/><path d="M507.80,402.70A171.6,171.6 0 0 1 506.26,399.49L509.52,397.97A168.0,168.0 0 0 0 511.03,401.10Z" fill="#ff7c43" stroke="#fff" stroke-width="0.9"/><path d="M506.26,399.49A171.6,171.6 0 0 1 504.78,396.25L508.08,394.80A168.0,168.0 0 0 0 509.52,397.97Z" fill="#ff7c43" stroke="#fff" stroke-width="0.9"/><path d="M504.78,396.25A171.6,171.6 0 0 1 503.38,392.99L506.70,391.60A168.0,168.0 0 0 0 508.08,394.80Z" fill="#ff7c43" stroke="#fff" stroke-width="0.9"/><path d="M503.38,392.99A171.6,171.6 0 0 1 502.04,389.69L505.39,388.37A168.0,168.0 0 0 0 506.70,391.60Z" fill="#ff7c43" stroke="#fff" stroke-width="0.9"/><path d="M502.04,389.69A171.6,171.6 0 0 1 492.21,353.64L495.77,353.08A168.0,168.0 0 0 0 505.39,388.37Z" fill="#ff7c43" stroke="#fff" stroke-width="0.9"/><path d="M492.21,353.64A171.6,171.6 0 0 1 491.77,350.68L495.33,350.18A168.0,168.0 0 0 0 495.77,353.08Z" fill="#ff7c43" stroke="#fff" stroke-width="0.9"/><path d="M491.77,350.68A171.6,171.6 0 0 1 490.13,329.79L493.73,329.73A168.0,168.0 0 0 0 495.33,350.18Z" fill="#ff7c43" stroke="#fff" stroke-width="0.9"/><path d="M490.13,329.79A171.6,171.6 0 0 1 490.10,326.80L493.70,326.80A168.0,168.0 0 0 0 493.73,329.73Z" fill="#ff7c43" stroke="#fff" stroke-width="0.9"/><path d="M490.10,326.80A171.6,171.6 0 0 1 490.13,323.81L493.73,323.87A168.0,168.0 0 0 0 493.70,326.80Z" fill="#ff7c43" stroke="#fff" stroke-width="0.9"/><path d="M490.13,323.81A171.6,171.6 0 0 1 491.38,305.89L494.95,306.33A168.0,168.0 0 0 0 493.73,323.87Z" fill="#ff7c43" stroke="#fff" stroke-width="0.9"/><path d="M491.38,305.89A171.6,171.6 0 0 1 491.84,302.42L495.40,302.94A168.0,168.0 0 0 0 494.95,306.33Z" fill="#ff7c43" stroke="#fff" stroke-width="0.9"/><path d="M491.84,302.42A171.6,171.6 0 0 1 492.37,298.97L495.92,299.55A168.0,168.0 0 0 0 495.40,302.94Z" fill="#ff7c43" stroke="#fff" stroke-width="0.9"/><path d="M492.37,298.97A171.6,171.6 0 0 1 492.97,295.53L496.51,296.18A168.0,168.0 0 0 0 495.92,299.55Z" fill="#ff7c43" stroke="#fff" stroke-width="0.9"/><path d="M492.97,295.53A171.6,171.6 0 0 1 493.65,292.10L497.17,292.83A168.0,168.0 0 0 0 496.51,296.18Z" fill="#ff7c43" stroke="#fff" stroke-width="0.9"/><path d="M493.65,292.10A171.6,171.6 0 0 1 494.39,288.68L497.90,289.48A168.0,168.0 0 0 0 497.17,292.83Z" fill="#ff7c43" stroke="#fff" stroke-width="0.9"/><path d="M494.39,288.68A171.6,171.6 0 0 1 495.20,285.29L498.69,286.16A168.0,168.0 0 0 0 497.90,289.48Z" fill="#ff7c43" stroke="#fff" stroke-width="0.9"/><path d="M495.20,285.29A171.6,171.6 0 0 1 503.74,259.75L507.06,261.16A168.0,168.0 0 0 0 498.69,286.16Z" fill="#ff7c43" stroke="#fff" stroke-width="0.9"/><path d="M505.55,255.64A171.6,171.6 0 0 1 507.21,252.11L510.45,253.68A168.0,168.0 0 0 0 508.83,257.13Z" fill="#ff7c43" stroke="#fff" stroke-width="0.9"/><path d="M507.21,252.11A171.6,171.6 0 0 1 508.94,248.63L512.14,250.27A168.0,168.0 0 0 0 510.45,253.68Z" fill="#ff7c43" stroke="#fff" stroke-width="0.9"/><path d="M508.94,248.63A171.6,171.6 0 0 1 510.75,245.18L513.92,246.90A168.0,168.0 0 0 0 512.14,250.27Z" fill="#ff7c43" stroke="#fff" stroke-width="0.9"/><path d="M510.75,245.18A171.6,171.6 0 0 1 512.64,241.78L515.77,243.56A168.0,168.0 0 0 0 513.92,246.90Z" fill="#ff7c43" stroke="#fff" stroke-width="0.9"/><path d="M512.64,241.78A171.6,171.6 0 0 1 514.61,238.42L517.70,240.27A168.0,168.0 0 0 0 515.77,243.56Z" fill="#ff7c43" stroke="#fff" stroke-width="0.9"/><path d="M816.82,245.36A175.2,175.2 0 0 1 833.07,290.37L829.55,291.12A171.6,171.6 0 0 0 813.63,247.03Z" fill="#ff7c43" stroke="#fff" stroke-width="0.9"/><path d="M833.07,290.37A175.2,175.2 0 0 1 833.81,294.05L830.27,294.72A171.6,171.6 0 0 0 829.55,291.12Z" fill="#ff7c43" stroke="#fff" stroke-width="0.9"/><path d="M833.81,294.05A175.2,175.2 0 0 1 834.47,297.73L830.92,298.33A171.6,171.6 0 0 0 830.27,294.72Z" fill="#ff7c43" stroke="#fff" stroke-width="0.9"/><path d="M835.40,303.93A175.2,175.2 0 0 1 835.86,307.73L832.28,308.12A171.6,171.6 0 0 0 831.83,304.40Z" fill="#ff7c43" stroke="#fff" stroke-width="0.9"/><path d="M835.86,307.73A175.2,175.2 0 0 1 836.23,311.53L832.65,311.84A171.6,171.6 0 0 0 832.28,308.12Z" fill="#ff7c43" stroke="#fff" stroke-width="0.9"/><path d="M836.86,323.13A175.2,175.2 0 0 1 836.90,326.70L833.30,326.70A171.6,171.6 0 0 0 833.26,323.21Z" fill="#ff7c43" stroke="#fff" stroke-width="0.9"/><path d="M836.90,326.70A175.2,175.2 0 0 1 836.87,330.26L833.27,330.19A171.6,171.6 0 0 0 833.30,326.70Z" fill="#ff7c43" stroke="#fff" stroke-width="0.9"/><path d="M836.87,330.26A175.2,175.2 0 0 1 836.76,333.82L833.16,333.68A171.6,171.6 0 0 0 833.27,330.19Z" fill="#ff7c43" stroke="#fff" stroke-width="0.9"/><path d="M836.76,333.82A175.2,175.2 0 0 1 836.58,337.38L832.99,337.17A171.6,171.6 0 0 0 833.16,333.68Z" fill="#ff7c43" stroke="#fff" stroke-width="0.9"/><path d="M836.58,337.38A175.2,175.2 0 0 1 836.33,340.94L832.74,340.65A171.6,171.6 0 0 0 832.99,337.17Z" fill="#ff7c43" stroke="#fff" stroke-width="0.9"/><path d="M836.33,340.94A175.2,175.2 0 0 1 836.00,344.49L832.42,344.13A171.6,171.6 0 0 0 832.74,340.65Z" fill="#ff7c43" stroke="#fff" stroke-width="0.9"/><path d="M836.00,344.49A175.2,175.2 0 0 1 835.61,348.03L832.04,347.60A171.6,171.6 0 0 0 832.42,344.13Z" fill="#ff7c43" stroke="#fff" stroke-width="0.9"/><path d="M835.61,348.03A175.2,175.2 0 0 1 835.14,351.57L831.58,351.06A171.6,171.6 0 0 0 832.04,347.60Z" fill="#ff7c43" stroke="#fff" stroke-width="0.9"/><path d="M835.14,351.57A175.2,175.2 0 0 1 834.60,355.09L831.05,354.51A171.6,171.6 0 0 0 831.58,351.06Z" fill="#ff7c43" stroke="#fff" stroke-width="0.9"/><path d="M834.60,355.09A175.2,175.2 0 0 1 833.99,358.60L830.45,357.95A171.6,171.6 0 0 0 831.05,354.51Z" fill="#ff7c43" stroke="#fff" stroke-width="0.9"/><path d="M833.99,358.60A175.2,175.2 0 0 1 833.31,362.10L829.78,361.37A171.6,171.6 0 0 0 830.45,357.95Z" fill="#ff7c43" stroke="#fff" stroke-width="0.9"/><path d="M833.31,362.10A175.2,175.2 0 0 1 832.55,365.58L829.04,364.79A171.6,171.6 0 0 0 829.78,361.37Z" fill="#ff7c43" stroke="#fff" stroke-width="0.9"/><path d="M832.55,365.58A175.2,175.2 0 0 1 831.73,369.05L828.24,368.18A171.6,171.6 0 0 0 829.04,364.79Z" fill="#ff7c43" stroke="#fff" stroke-width="0.9"/><path d="M831.73,369.05A175.2,175.2 0 0 1 830.83,372.50L827.36,371.56A171.6,171.6 0 0 0 828.24,368.18Z" fill="#ff7c43" stroke="#fff" stroke-width="0.9"/><path d="M830.83,372.50A175.2,175.2 0 0 1 829.87,375.93L826.41,374.92A171.6,171.6 0 0 0 827.36,371.56Z" fill="#ff7c43" stroke="#fff" stroke-width="0.9"/><path d="M829.87,375.93A175.2,175.2 0 0 1 828.83,379.35L825.40,378.27A171.6,171.6 0 0 0 826.41,374.92Z" fill="#ff7c43" stroke="#fff" stroke-width="0.9"/><path d="M828.83,379.35A175.2,175.2 0 0 1 827.73,382.74L824.32,381.59A171.6,171.6 0 0 0 825.40,378.27Z" fill="#ff7c43" stroke="#fff" stroke-width="0.9"/><path d="M827.73,382.74A175.2,175.2 0 0 1 826.56,386.10L823.17,384.88A171.6,171.6 0 0 0 824.32,381.59Z" fill="#ff7c43" stroke="#fff" stroke-width="0.9"/><path d="M826.56,386.10A175.2,175.2 0 0 1 825.32,389.44L821.96,388.16A171.6,171.6 0 0 0 823.17,384.88Z" fill="#ff7c43" stroke="#fff" stroke-width="0.9"/><path d="M823.21,394.69A175.2,175.2 0 0 1 821.13,399.45L817.85,397.96A171.6,171.6 0 0 0 819.89,393.30Z" fill="#ff7c43" stroke="#fff" stroke-width="0.9"/><path d="M821.13,399.45A175.2,175.2 0 0 1 802.58,430.95L799.69,428.81A171.6,171.6 0 0 0 817.85,397.96Z" fill="#ff7c43" stroke="#fff" stroke-width="0.9"/><path d="M802.58,430.95A175.2,175.2 0 0 1 777.91,457.92L775.52,455.22A171.6,171.6 0 0 0 799.69,428.81Z" fill="#ff7c43" stroke="#fff" stroke-width="0.9"/><path d="M759.67,472.05A175.2,175.2 0 0 1 756.69,474.01L754.74,470.99A171.6,171.6 0 0 0 757.66,469.06Z" fill="#ff7c43" stroke="#fff" stroke-width="0.9"/><path d="M756.69,474.01A175.2,175.2 0 0 1 753.68,475.92L751.79,472.85A171.6,171.6 0 0 0 754.74,470.99Z" fill="#ff7c43" stroke="#fff" stroke-width="0.9"/><path d="M753.68,475.92A175.2,175.2 0 0 1 750.62,477.76L748.79,474.66A171.6,171.6 0 0 0 751.79,472.85Z" fill="#ff7c43" stroke="#fff" stroke-width="0.9"/><path d="M750.62,477.76A175.2,175.2 0 0 1 747.53,479.54L745.77,476.40A171.6,171.6 0 0 0 748.79,474.66Z" fill="#ff7c43" stroke="#fff" stroke-width="0.9"/><path d="M747.53,479.54A175.2,175.2 0 0 1 744.40,481.25L742.70,478.08A171.6,171.6 0 0 0 745.77,476.40Z" fill="#ff7c43" stroke="#fff" stroke-width="0.9"/><path d="M744.40,481.25A175.2,175.2 0 0 1 741.24,482.90L739.60,479.70A171.6,171.6 0 0 0 742.70,478.08Z" fill="#ff7c43" stroke="#fff" stroke-width="0.9"/><path d="M738.50,484.27A175.2,175.2 0 0 1 735.32,485.78L733.80,482.52A171.6,171.6 0 0 0 736.92,481.03Z" fill="#ff7c43" stroke="#fff" stroke-width="0.9"/><path d="M735.32,485.78A175.2,175.2 0 0 1 732.10,487.23L730.65,483.94A171.6,171.6 0 0 0 733.80,482.52Z" fill="#ff7c43" stroke="#fff" stroke-width="0.9"/><path d="M732.10,487.23A175.2,175.2 0 0 1 728.85,488.62L727.47,485.29A171.6,171.6 0 0 0 730.65,483.94Z" fill="#ff7c43" stroke="#fff" stroke-width="0.9"/><path d="M728.85,488.62A175.2,175.2 0 0 1 725.58,489.94L724.27,486.59A171.6,171.6 0 0 0 727.47,485.29Z" fill="#ff7c43" stroke="#fff" stroke-width="0.9"/><path d="M725.58,489.94A175.2,175.2 0 0 1 722.28,491.19L721.04,487.81A171.6,171.6 0 0 0 724.27,486.59Z" fill="#ff7c43" stroke="#fff" stroke-width="0.9"/><path d="M722.28,491.19A175.2,175.2 0 0 1 718.96,492.38L717.79,488.98A171.6,171.6 0 0 0 721.04,487.81Z" fill="#ff7c43" stroke="#fff" stroke-width="0.9"/><path d="M718.96,492.38A175.2,175.2 0 0 1 715.62,493.50L714.51,490.07A171.6,171.6 0 0 0 717.79,488.98Z" fill="#ff7c43" stroke="#fff" stroke-width="0.9"/><path d="M715.62,493.50A175.2,175.2 0 0 1 712.25,494.55L711.21,491.10A171.6,171.6 0 0 0 714.51,490.07Z" fill="#ff7c43" stroke="#fff" stroke-width="0.9"/><path d="M712.25,494.55A175.2,175.2 0 0 1 708.86,495.53L707.89,492.07A171.6,171.6 0 0 0 711.21,491.10Z" fill="#ff7c43" stroke="#fff" stroke-width="0.9"/><path d="M708.86,495.53A175.2,175.2 0 0 1 705.45,496.45L704.55,492.96A171.6,171.6 0 0 0 707.89,492.07Z" fill="#ff7c43" stroke="#fff" stroke-width="0.9"/><path d="M705.45,496.45A175.2,175.2 0 0 1 702.03,497.30L701.20,493.79A171.6,171.6 0 0 0 704.55,492.96Z" fill="#ff7c43" stroke="#fff" stroke-width="0.9"/><path d="M702.03,497.30A175.2,175.2 0 0 1 698.59,498.07L697.83,494.55A171.6,171.6 0 0 0 701.20,493.79Z" fill="#ff7c43" stroke="#fff" stroke-width="0.9"/><path d="M698.59,498.07A175.2,175.2 0 0 1 695.13,498.78L694.44,495.25A171.6,171.6 0 0 0 697.83,494.55Z" fill="#ff7c43" stroke="#fff" stroke-width="0.9"/><path d="M695.13,498.78A175.2,175.2 0 0 1 676.97,501.33L676.66,497.75A171.6,171.6 0 0 0 694.44,495.25Z" fill="#ff7c43" stroke="#fff" stroke-width="0.9"/><path d="M676.97,501.33A175.2,175.2 0 0 1 674.23,501.55L673.97,497.96A171.6,171.6 0 0 0 676.66,497.75Z" fill="#ff7c43" stroke="#fff" stroke-width="0.9"/><path d="M674.23,501.55A175.2,175.2 0 0 1 671.48,501.73L671.28,498.13A171.6,171.6 0 0 0 673.97,497.96Z" fill="#ff7c43" stroke="#fff" stroke-width="0.9"/><path d="M668.43,501.87A175.2,175.2 0 0 1 664.83,501.97L664.77,498.37A171.6,171.6 0 0 0 668.29,498.27Z" fill="#ff7c43" stroke="#fff" stroke-width="0.9"/><path d="M664.83,501.97A175.2,175.2 0 0 1 661.24,502.00L661.25,498.40A171.6,171.6 0 0 0 664.77,498.37Z" fill="#ff7c43" stroke="#fff" stroke-width="0.9"/><path d="M661.24,502.00A175.2,175.2 0 0 1 657.65,501.95L657.73,498.35A171.6,171.6 0 0 0 661.25,498.40Z" fill="#ff7c43" stroke="#fff" stroke-width="0.9"/><path d="M657.65,501.95A175.2,175.2 0 0 1 654.06,501.83L654.21,498.24A171.6,171.6 0 0 0 657.73,498.35Z" fill="#ff7c43" stroke="#fff" stroke-width="0.9"/><path d="M654.06,501.83A175.2,175.2 0 0 1 650.47,501.64L650.70,498.05A171.6,171.6 0 0 0 654.21,498.24Z" fill="#ff7c43" stroke="#fff" stroke-width="0.9"/><path d="M650.47,501.64A175.2,175.2 0 0 1 646.89,501.37L647.19,497.79A171.6,171.6 0 0 0 650.70,498.05Z" fill="#ff7c43" stroke="#fff" stroke-width="0.9"/><path d="M646.89,501.37A175.2,175.2 0 0 1 643.31,501.03L643.69,497.45A171.6,171.6 0 0 0 647.19,497.79Z" fill="#ff7c43" stroke="#fff" stroke-width="0.9"/><path d="M643.31,501.03A175.2,175.2 0 0 1 639.74,500.62L640.19,497.05A171.6,171.6 0 0 0 643.69,497.45Z" fill="#ff7c43" stroke="#fff" stroke-width="0.9"/><path d="M639.74,500.62A175.2,175.2 0 0 1 636.18,500.13L636.71,496.57A171.6,171.6 0 0 0 640.19,497.05Z" fill="#ff7c43" stroke="#fff" stroke-width="0.9"/><path d="M636.18,500.13A175.2,175.2 0 0 1 632.63,499.57L633.23,496.02A171.6,171.6 0 0 0 636.71,496.57Z" fill="#ff7c43" stroke="#fff" stroke-width="0.9"/><path d="M632.63,499.57A175.2,175.2 0 0 1 629.10,498.94L629.77,495.40A171.6,171.6 0 0 0 633.23,496.02Z" fill="#ff7c43" stroke="#fff" stroke-width="0.9"/><path d="M629.10,498.94A175.2,175.2 0 0 1 625.57,498.23L626.32,494.71A171.6,171.6 0 0 0 629.77,495.40Z" fill="#ff7c43" stroke="#fff" stroke-width="0.9"/><path d="M625.57,498.23A175.2,175.2 0 0 1 622.07,497.46L622.88,493.95A171.6,171.6 0 0 0 626.32,494.71Z" fill="#ff7c43" stroke="#fff" stroke-width="0.9"/><path d="M622.07,497.46A175.2,175.2 0 0 1 618.57,496.61L619.46,493.12A171.6,171.6 0 0 0 622.88,493.95Z" fill="#ff7c43" stroke="#fff" stroke-width="0.9"/><path d="M618.57,496.61A175.2,175.2 0 0 1 615.10,495.69L616.06,492.22A171.6,171.6 0 0 0 619.46,493.12Z" fill="#ff7c43" stroke="#fff" stroke-width="0.9"/><path d="M615.10,495.69A175.2,175.2 0 0 1 611.65,494.70L612.68,491.25A171.6,171.6 0 0 0 616.06,492.22Z" fill="#ff7c43" stroke="#fff" stroke-width="0.9"/><path d="M611.65,494.70A175.2,175.2 0 0 1 608.21,493.64L609.31,490.21A171.6,171.6 0 0 0 612.68,491.25Z" fill="#ff7c43" stroke="#fff" stroke-width="0.9"/><path d="M608.21,493.64A175.2,175.2 0 0 1 604.81,492.50L605.97,489.10A171.6,171.6 0 0 0 609.31,490.21Z" fill="#ff7c43" stroke="#fff" stroke-width="0.9"/><path d="M604.81,492.50A175.2,175.2 0 0 1 601.42,491.30L602.66,487.92A171.6,171.6 0 0 0 605.97,489.10Z" fill="#ff7c43" stroke="#fff" stroke-width="0.9"/><path d="M601.42,491.30A175.2,175.2 0 0 1 598.06,490.03L599.37,486.68A171.6,171.6 0 0 0 602.66,487.92Z" fill="#ff7c43" stroke="#fff" stroke-width="0.9"/><path d="M598.06,490.03A175.2,175.2 0 0 1 594.72,488.69L596.10,485.37A171.6,171.6 0 0 0 599.37,486.68Z" fill="#ff7c43" stroke="#fff" stroke-width="0.9"/><path d="M594.72,488.69A175.2,175.2 0 0 1 591.42,487.29L592.86,483.99A171.6,171.6 0 0 0 596.10,485.37Z" fill="#ff7c43" stroke="#fff" stroke-width="0.9"/><path d="M591.42,487.29A175.2,175.2 0 0 1 588.14,485.81L589.65,482.54A171.6,171.6 0 0 0 592.86,483.99Z" fill="#ff7c43" stroke="#fff" stroke-width="0.9"/><path d="M588.14,485.81A175.2,175.2 0 0 1 584.90,484.27L586.48,481.03A171.6,171.6 0 0 0 589.65,482.54Z" fill="#ff7c43" stroke="#fff" stroke-width="0.9"/><path d="M546.76,459.03A175.2,175.2 0 0 1 537.81,450.69L540.36,448.14A171.6,171.6 0 0 0 549.12,456.31Z" fill="#ff7c43" stroke="#fff" stroke-width="0.9"/><path d="M537.81,450.69A175.2,175.2 0 0 1 535.41,448.23L538.00,445.73A171.6,171.6 0 0 0 540.36,448.14Z" fill="#ff7c43" stroke="#fff" stroke-width="0.9"/><path d="M535.41,448.23A175.2,175.2 0 0 1 533.05,445.73L535.69,443.28A171.6,171.6 0 0 0 538.00,445.73Z" fill="#ff7c43" stroke="#fff" stroke-width="0.9"/><path d="M533.05,445.73A175.2,175.2 0 0 1 530.74,443.18L533.43,440.79A171.6,171.6 0 0 0 535.69,443.28Z" fill="#ff7c43" stroke="#fff" stroke-width="0.9"/><path d="M530.74,443.18A175.2,175.2 0 0 1 528.48,440.58L531.21,438.25A171.6,171.6 0 0 0 533.43,440.79Z" fill="#ff7c43" stroke="#fff" stroke-width="0.9"/><path d="M498.69,391.01A175.2,175.2 0 0 1 497.46,387.80L500.84,386.54A171.6,171.6 0 0 0 502.04,389.69Z" fill="#ff7c43" stroke="#fff" stroke-width="0.9"/><path d="M497.46,387.80A175.2,175.2 0 0 1 496.30,384.56L499.69,383.37A171.6,171.6 0 0 0 500.84,386.54Z" fill="#ff7c43" stroke="#fff" stroke-width="0.9"/><path d="M496.30,384.56A175.2,175.2 0 0 1 495.19,381.30L498.61,380.18A171.6,171.6 0 0 0 499.69,383.37Z" fill="#ff7c43" stroke="#fff" stroke-width="0.9"/><path d="M495.19,381.30A175.2,175.2 0 0 1 494.16,378.02L497.60,376.97A171.6,171.6 0 0 0 498.61,380.18Z" fill="#ff7c43" stroke="#fff" stroke-width="0.9"/><path d="M494.16,378.02A175.2,175.2 0 0 1 492.47,372.15L495.95,371.21A171.6,171.6 0 0 0 497.60,376.97Z" fill="#ff7c43" stroke="#fff" stroke-width="0.9"/><path d="M492.47,372.15A175.2,175.2 0 0 1 491.56,368.59L495.05,367.73A171.6,171.6 0 0 0 495.95,371.21Z" fill="#ff7c43" stroke="#fff" stroke-width="0.9"/><path d="M491.56,368.59A175.2,175.2 0 0 1 490.72,365.02L494.23,364.23A171.6,171.6 0 0 0 495.05,367.73Z" fill="#ff7c43" stroke="#fff" stroke-width="0.9"/><path d="M490.72,365.02A175.2,175.2 0 0 1 489.96,361.43L493.49,360.72A171.6,171.6 0 0 0 494.23,364.23Z" fill="#ff7c43" stroke="#fff" stroke-width="0.9"/><path d="M489.96,361.43A175.2,175.2 0 0 1 489.27,357.83L492.81,357.19A171.6,171.6 0 0 0 493.49,360.72Z" fill="#ff7c43" stroke="#fff" stroke-width="0.9"/><path d="M489.27,357.83A175.2,175.2 0 0 1 488.66,354.21L492.21,353.64A171.6,171.6 0 0 0 492.81,357.19Z" fill="#ff7c43" stroke="#fff" stroke-width="0.9"/><path d="M488.21,351.18A175.2,175.2 0 0 1 487.04,340.55L490.63,340.26A171.6,171.6 0 0 0 491.77,350.68Z" fill="#ff7c43" stroke="#fff" stroke-width="0.9"/><path d="M487.04,340.55A175.2,175.2 0 0 1 486.80,336.99L490.39,336.78A171.6,171.6 0 0 0 490.63,340.26Z" fill="#ff7c43" stroke="#fff" stroke-width="0.9"/><path d="M486.80,336.99A175.2,175.2 0 0 1 486.63,333.42L490.22,333.29A171.6,171.6 0 0 0 490.39,336.78Z" fill="#ff7c43" stroke="#fff" stroke-width="0.9"/><path d="M486.63,333.42A175.2,175.2 0 0 1 486.53,329.86L490.13,329.79A171.6,171.6 0 0 0 490.22,333.29Z" fill="#ff7c43" stroke="#fff" stroke-width="0.9"/><path d="M486.53,323.74A175.2,175.2 0 0 1 486.63,320.13L490.22,320.27A171.6,171.6 0 0 0 490.13,323.81Z" fill="#ff7c43" stroke="#fff" stroke-width="0.9"/><path d="M486.63,320.13A175.2,175.2 0 0 1 486.80,316.52L490.40,316.73A171.6,171.6 0 0 0 490.22,320.27Z" fill="#ff7c43" stroke="#fff" stroke-width="0.9"/><path d="M486.80,316.52A175.2,175.2 0 0 1 487.05,312.92L490.64,313.20A171.6,171.6 0 0 0 490.40,316.73Z" fill="#ff7c43" stroke="#fff" stroke-width="0.9"/><path d="M487.05,312.92A175.2,175.2 0 0 1 487.37,309.32L490.96,309.68A171.6,171.6 0 0 0 490.64,313.20Z" fill="#ff7c43" stroke="#fff" stroke-width="0.9"/><path d="M487.37,309.32A175.2,175.2 0 0 1 487.77,305.72L491.35,306.16A171.6,171.6 0 0 0 490.96,309.68Z" fill="#ff7c43" stroke="#fff" stroke-width="0.9"/><path d="M487.77,305.72A175.2,175.2 0 0 1 488.24,302.14L491.81,302.65A171.6,171.6 0 0 0 491.35,306.16Z" fill="#ff7c43" stroke="#fff" stroke-width="0.9"/><path d="M488.24,302.14A175.2,175.2 0 0 1 488.79,298.57L492.34,299.15A171.6,171.6 0 0 0 491.81,302.65Z" fill="#ff7c43" stroke="#fff" stroke-width="0.9"/><path d="M488.79,298.57A175.2,175.2 0 0 1 489.41,295.01L492.95,295.66A171.6,171.6 0 0 0 492.34,299.15Z" fill="#ff7c43" stroke="#fff" stroke-width="0.9"/><path d="M489.41,295.01A175.2,175.2 0 0 1 490.10,291.46L493.63,292.19A171.6,171.6 0 0 0 492.95,295.66Z" fill="#ff7c43" stroke="#fff" stroke-width="0.9"/><path d="M490.10,291.46A175.2,175.2 0 0 1 490.87,287.93L494.38,288.73A171.6,171.6 0 0 0 493.63,292.19Z" fill="#ff7c43" stroke="#fff" stroke-width="0.9"/><path d="M490.87,287.93A175.2,175.2 0 0 1 491.70,284.42L495.20,285.29A171.6,171.6 0 0 0 494.38,288.73Z" fill="#ff7c43" stroke="#fff" stroke-width="0.9"/><path d="M491.70,284.42A175.2,175.2 0 0 1 496.05,269.76L499.45,270.93A171.6,171.6 0 0 0 495.20,285.29Z" fill="#ff7c43" stroke="#fff" stroke-width="0.9"/><path d="M496.05,269.76A175.2,175.2 0 0 1 497.42,265.92L500.79,267.17A171.6,171.6 0 0 0 499.45,270.93Z" fill="#ff7c43" stroke="#fff" stroke-width="0.9"/><path d="M497.42,265.92A175.2,175.2 0 0 1 498.88,262.12L502.22,263.44A171.6,171.6 0 0 0 500.79,267.17Z" fill="#ff7c43" stroke="#fff" stroke-width="0.9"/><path d="M498.88,262.12A175.2,175.2 0 0 1 500.43,258.34L503.74,259.75A171.6,171.6 0 0 0 502.22,263.44Z" fill="#ff7c43" stroke="#fff" stroke-width="0.9"/><path d="M505.60,247.26A175.2,175.2 0 0 1 507.49,243.65L510.66,245.36A171.6,171.6 0 0 0 508.80,248.90Z" fill="#ff7c43" stroke="#fff" stroke-width="0.9"/><path d="M507.49,243.65A175.2,175.2 0 0 1 509.47,240.08L512.59,241.87A171.6,171.6 0 0 0 510.66,245.36Z" fill="#ff7c43" stroke="#fff" stroke-width="0.9"/><path d="M509.47,240.08A175.2,175.2 0 0 1 511.52,236.57L514.61,238.42A171.6,171.6 0 0 0 512.59,241.87Z" fill="#ff7c43" stroke="#fff" stroke-width="0.9"/><path d="M820.01,243.69A178.79999999999998,178.79999999999998 0 0 1 836.56,289.47L833.04,290.22A175.2,175.2 0 0 0 816.82,245.36Z" fill="#ff7c43" stroke="#fff" stroke-width="0.9"/><path d="M838.97,303.46A178.79999999999998,178.79999999999998 0 0 1 839.44,307.33L835.86,307.73A175.2,175.2 0 0 0 835.40,303.93Z" fill="#ff7c43" stroke="#fff" stroke-width="0.9"/><path d="M839.44,307.33A178.79999999999998,178.79999999999998 0 0 1 839.82,311.22L836.23,311.53A175.2,175.2 0 0 0 835.86,307.73Z" fill="#ff7c43" stroke="#fff" stroke-width="0.9"/><path d="M840.46,323.06A178.79999999999998,178.79999999999998 0 0 1 840.50,326.60L836.90,326.61A175.2,175.2 0 0 0 836.86,323.13Z" fill="#ff7c43" stroke="#fff" stroke-width="0.9"/><path d="M840.50,326.60A178.79999999999998,178.79999999999998 0 0 1 840.47,330.15L836.87,330.09A175.2,175.2 0 0 0 836.90,326.61Z" fill="#ff7c43" stroke="#fff" stroke-width="0.9"/><path d="M840.47,330.15A178.79999999999998,178.79999999999998 0 0 1 840.37,333.70L836.77,333.56A175.2,175.2 0 0 0 836.87,330.09Z" fill="#ff7c43" stroke="#fff" stroke-width="0.9"/><path d="M840.37,333.70A178.79999999999998,178.79999999999998 0 0 1 840.19,337.25L836.60,337.04A175.2,175.2 0 0 0 836.77,333.56Z" fill="#ff7c43" stroke="#fff" stroke-width="0.9"/><path d="M840.19,337.25A178.79999999999998,178.79999999999998 0 0 1 839.95,340.79L836.36,340.51A175.2,175.2 0 0 0 836.60,337.04Z" fill="#ff7c43" stroke="#fff" stroke-width="0.9"/><path d="M839.95,340.79A178.79999999999998,178.79999999999998 0 0 1 839.64,344.33L836.06,343.97A175.2,175.2 0 0 0 836.36,340.51Z" fill="#ff7c43" stroke="#fff" stroke-width="0.9"/><path d="M839.64,344.33A178.79999999999998,178.79999999999998 0 0 1 839.26,347.85L835.68,347.43A175.2,175.2 0 0 0 836.06,343.97Z" fill="#ff7c43" stroke="#fff" stroke-width="0.9"/><path d="M839.26,347.85A178.79999999999998,178.79999999999998 0 0 1 838.80,351.38L835.24,350.88A175.2,175.2 0 0 0 835.68,347.43Z" fill="#ff7c43" stroke="#fff" stroke-width="0.9"/><path d="M838.80,351.38A178.79999999999998,178.79999999999998 0 0 1 838.28,354.89L834.73,354.32A175.2,175.2 0 0 0 835.24,350.88Z" fill="#ff7c43" stroke="#fff" stroke-width="0.9"/><path d="M838.28,354.89A178.79999999999998,178.79999999999998 0 0 1 837.69,358.39L834.14,357.75A175.2,175.2 0 0 0 834.73,354.32Z" fill="#ff7c43" stroke="#fff" stroke-width="0.9"/><path d="M837.69,358.39A178.79999999999998,178.79999999999998 0 0 1 837.03,361.87L833.50,361.17A175.2,175.2 0 0 0 834.14,357.75Z" fill="#ff7c43" stroke="#fff" stroke-width="0.9"/><path d="M837.03,361.87A178.79999999999998,178.79999999999998 0 0 1 836.30,365.35L832.78,364.57A175.2,175.2 0 0 0 833.50,361.17Z" fill="#ff7c43" stroke="#fff" stroke-width="0.9"/><path d="M824.40,400.95A178.79999999999998,178.79999999999998 0 0 1 822.83,404.30L819.59,402.74A175.2,175.2 0 0 0 821.13,399.45Z" fill="#ff7c43" stroke="#fff" stroke-width="0.9"/><path d="M822.83,404.30A178.79999999999998,178.79999999999998 0 0 1 821.19,407.63L817.98,406.00A175.2,175.2 0 0 0 819.59,402.74Z" fill="#ff7c43" stroke="#fff" stroke-width="0.9"/><path d="M821.19,407.63A178.79999999999998,178.79999999999998 0 0 1 819.48,410.91L816.30,409.22A175.2,175.2 0 0 0 817.98,406.00Z" fill="#ff7c43" stroke="#fff" stroke-width="0.9"/><path d="M819.48,410.91A178.79999999999998,178.79999999999998 0 0 1 817.70,414.17L814.56,412.41A175.2,175.2 0 0 0 816.30,409.22Z" fill="#ff7c43" stroke="#fff" stroke-width="0.9"/><path d="M817.70,414.17A178.79999999999998,178.79999999999998 0 0 1 815.86,417.38L812.75,415.56A175.2,175.2 0 0 0 814.56,412.41Z" fill="#ff7c43" stroke="#fff" stroke-width="0.9"/><path d="M815.86,417.38A178.79999999999998,178.79999999999998 0 0 1 813.95,420.56L810.88,418.67A175.2,175.2 0 0 0 812.75,415.56Z" fill="#ff7c43" stroke="#fff" stroke-width="0.9"/><path d="M813.95,420.56A178.79999999999998,178.79999999999998 0 0 1 811.97,423.69L808.95,421.74A175.2,175.2 0 0 0 810.88,418.67Z" fill="#ff7c43" stroke="#fff" stroke-width="0.9"/><path d="M811.97,423.69A178.79999999999998,178.79999999999998 0 0 1 809.93,426.78L806.95,424.77A175.2,175.2 0 0 0 808.95,421.74Z" fill="#ff7c43" stroke="#fff" stroke-width="0.9"/><path d="M809.93,426.78A178.79999999999998,178.79999999999998 0 0 1 790.32,451.00L787.73,448.50A175.2,175.2 0 0 0 806.95,424.77Z" fill="#ff7c43" stroke="#fff" stroke-width="0.9"/><path d="M790.32,451.00A178.79999999999998,178.79999999999998 0 0 1 787.85,453.51L785.31,450.96A175.2,175.2 0 0 0 787.73,448.50Z" fill="#ff7c43" stroke="#fff" stroke-width="0.9"/><path d="M787.85,453.51A178.79999999999998,178.79999999999998 0 0 1 785.34,455.96L782.85,453.36A175.2,175.2 0 0 0 785.31,450.96Z" fill="#ff7c43" stroke="#fff" stroke-width="0.9"/><path d="M785.34,455.96A178.79999999999998,178.79999999999998 0 0 1 782.78,458.36L780.34,455.71A175.2,175.2 0 0 0 782.85,453.36Z" fill="#ff7c43" stroke="#fff" stroke-width="0.9"/><path d="M782.78,458.36A178.79999999999998,178.79999999999998 0 0 1 780.18,460.71L777.79,458.02A175.2,175.2 0 0 0 780.34,455.71Z" fill="#ff7c43" stroke="#fff" stroke-width="0.9"/><path d="M761.68,475.03A178.79999999999998,178.79999999999998 0 0 1 758.21,477.32L756.26,474.29A175.2,175.2 0 0 0 759.67,472.05Z" fill="#ff7c43" stroke="#fff" stroke-width="0.9"/><path d="M758.21,477.32A178.79999999999998,178.79999999999998 0 0 1 754.68,479.52L752.81,476.45A175.2,175.2 0 0 0 756.26,474.29Z" fill="#ff7c43" stroke="#fff" stroke-width="0.9"/><path d="M754.68,479.52A178.79999999999998,178.79999999999998 0 0 1 751.10,481.65L749.30,478.53A175.2,175.2 0 0 0 752.81,476.45Z" fill="#ff7c43" stroke="#fff" stroke-width="0.9"/><path d="M740.08,487.50A178.79999999999998,178.79999999999998 0 0 1 736.87,489.03L735.35,485.77A175.2,175.2 0 0 0 738.50,484.27Z" fill="#ff7c43" stroke="#fff" stroke-width="0.9"/><path d="M736.87,489.03A178.79999999999998,178.79999999999998 0 0 1 733.63,490.50L732.18,487.20A175.2,175.2 0 0 0 735.35,485.77Z" fill="#ff7c43" stroke="#fff" stroke-width="0.9"/><path d="M733.63,490.50A178.79999999999998,178.79999999999998 0 0 1 730.35,491.89L728.97,488.57A175.2,175.2 0 0 0 732.18,487.20Z" fill="#ff7c43" stroke="#fff" stroke-width="0.9"/><path d="M730.35,491.89A178.79999999999998,178.79999999999998 0 0 1 727.06,493.23L725.74,489.88A175.2,175.2 0 0 0 728.97,488.57Z" fill="#ff7c43" stroke="#fff" stroke-width="0.9"/><path d="M727.06,493.23A178.79999999999998,178.79999999999998 0 0 1 723.73,494.49L722.48,491.12A175.2,175.2 0 0 0 725.74,489.88Z" fill="#ff7c43" stroke="#fff" stroke-width="0.9"/><path d="M723.73,494.49A178.79999999999998,178.79999999999998 0 0 1 720.38,495.70L719.20,492.29A175.2,175.2 0 0 0 722.48,491.12Z" fill="#ff7c43" stroke="#fff" stroke-width="0.9"/><path d="M720.38,495.70A178.79999999999998,178.79999999999998 0 0 1 717.01,496.83L715.90,493.41A175.2,175.2 0 0 0 719.20,492.29Z" fill="#ff7c43" stroke="#fff" stroke-width="0.9"/><path d="M717.01,496.83A178.79999999999998,178.79999999999998 0 0 1 713.62,497.90L712.57,494.45A175.2,175.2 0 0 0 715.90,493.41Z" fill="#ff7c43" stroke="#fff" stroke-width="0.9"/><path d="M713.62,497.90A178.79999999999998,178.79999999999998 0 0 1 710.20,498.90L709.23,495.43A175.2,175.2 0 0 0 712.57,494.45Z" fill="#ff7c43" stroke="#fff" stroke-width="0.9"/><path d="M710.20,498.90A178.79999999999998,178.79999999999998 0 0 1 706.77,499.83L705.86,496.34A175.2,175.2 0 0 0 709.23,495.43Z" fill="#ff7c43" stroke="#fff" stroke-width="0.9"/><path d="M706.77,499.83A178.79999999999998,178.79999999999998 0 0 1 703.32,500.69L702.48,497.19A175.2,175.2 0 0 0 705.86,496.34Z" fill="#ff7c43" stroke="#fff" stroke-width="0.9"/><path d="M703.32,500.69A178.79999999999998,178.79999999999998 0 0 1 699.85,501.48L699.08,497.97A175.2,175.2 0 0 0 702.48,497.19Z" fill="#ff7c43" stroke="#fff" stroke-width="0.9"/><path d="M699.85,501.48A178.79999999999998,178.79999999999998 0 0 1 696.37,502.21L695.67,498.68A175.2,175.2 0 0 0 699.08,497.97Z" fill="#ff7c43" stroke="#fff" stroke-width="0.9"/><path d="M696.37,502.21A178.79999999999998,178.79999999999998 0 0 1 692.87,502.86L692.24,499.32A175.2,175.2 0 0 0 695.67,498.68Z" fill="#ff7c43" stroke="#fff" stroke-width="0.9"/><path d="M692.87,502.86A178.79999999999998,178.79999999999998 0 0 1 689.36,503.45L688.81,499.89A175.2,175.2 0 0 0 692.24,499.32Z" fill="#ff7c43" stroke="#fff" stroke-width="0.9"/><path d="M689.36,503.45A178.79999999999998,178.79999999999998 0 0 1 685.84,503.96L685.36,500.40A175.2,175.2 0 0 0 688.81,499.89Z" fill="#ff7c43" stroke="#fff" stroke-width="0.9"/><path d="M685.84,503.96A178.79999999999998,178.79999999999998 0 0 1 682.31,504.41L681.90,500.83A175.2,175.2 0 0 0 685.36,500.40Z" fill="#ff7c43" stroke="#fff" stroke-width="0.9"/><path d="M682.31,504.41A178.79999999999998,178.79999999999998 0 0 1 678.78,504.78L678.43,501.20A175.2,175.2 0 0 0 681.90,500.83Z" fill="#ff7c43" stroke="#fff" stroke-width="0.9"/><path d="M678.78,504.78A178.79999999999998,178.79999999999998 0 0 1 675.23,505.09L674.96,501.50A175.2,175.2 0 0 0 678.43,501.20Z" fill="#ff7c43" stroke="#fff" stroke-width="0.9"/><path d="M675.23,505.09A178.79999999999998,178.79999999999998 0 0 1 671.68,505.32L671.48,501.73A175.2,175.2 0 0 0 674.96,501.50Z" fill="#ff7c43" stroke="#fff" stroke-width="0.9"/><path d="M544.40,461.74A178.79999999999998,178.79999999999998 0 0 1 541.56,459.23L543.98,456.56A175.2,175.2 0 0 0 546.76,459.03Z" fill="#ff7c43" stroke="#fff" stroke-width="0.9"/><path d="M541.56,459.23A178.79999999999998,178.79999999999998 0 0 1 538.78,456.65L541.26,454.04A175.2,175.2 0 0 0 543.98,456.56Z" fill="#ff7c43" stroke="#fff" stroke-width="0.9"/><path d="M538.78,456.65A178.79999999999998,178.79999999999998 0 0 1 536.06,454.02L538.59,451.45A175.2,175.2 0 0 0 541.26,454.04Z" fill="#ff7c43" stroke="#fff" stroke-width="0.9"/><path d="M536.06,454.02A178.79999999999998,178.79999999999998 0 0 1 533.39,451.33L535.98,448.82A175.2,175.2 0 0 0 538.59,451.45Z" fill="#ff7c43" stroke="#fff" stroke-width="0.9"/><path d="M533.39,451.33A178.79999999999998,178.79999999999998 0 0 1 530.78,448.58L533.42,446.13A175.2,175.2 0 0 0 535.98,448.82Z" fill="#ff7c43" stroke="#fff" stroke-width="0.9"/><path d="M530.78,448.58A178.79999999999998,178.79999999999998 0 0 1 528.23,445.78L530.92,443.38A175.2,175.2 0 0 0 533.42,446.13Z" fill="#ff7c43" stroke="#fff" stroke-width="0.9"/><path d="M528.23,445.78A178.79999999999998,178.79999999999998 0 0 1 525.74,442.92L528.48,440.58A175.2,175.2 0 0 0 530.92,443.38Z" fill="#ff7c43" stroke="#fff" stroke-width="0.9"/><path d="M495.34,392.33A178.79999999999998,178.79999999999998 0 0 1 494.07,389.02L497.45,387.77A175.2,175.2 0 0 0 498.69,391.01Z" fill="#ff7c43" stroke="#fff" stroke-width="0.9"/><path d="M494.07,389.02A178.79999999999998,178.79999999999998 0 0 1 492.87,385.68L496.27,384.50A175.2,175.2 0 0 0 497.45,387.77Z" fill="#ff7c43" stroke="#fff" stroke-width="0.9"/><path d="M492.87,385.68A178.79999999999998,178.79999999999998 0 0 1 491.74,382.32L495.16,381.20A175.2,175.2 0 0 0 496.27,384.50Z" fill="#ff7c43" stroke="#fff" stroke-width="0.9"/><path d="M491.74,382.32A178.79999999999998,178.79999999999998 0 0 1 490.67,378.94L494.11,377.89A175.2,175.2 0 0 0 495.16,381.20Z" fill="#ff7c43" stroke="#fff" stroke-width="0.9"/><path d="M490.67,378.94A178.79999999999998,178.79999999999998 0 0 1 489.67,375.54L493.13,374.56A175.2,175.2 0 0 0 494.11,377.89Z" fill="#ff7c43" stroke="#fff" stroke-width="0.9"/><path d="M489.67,375.54A178.79999999999998,178.79999999999998 0 0 1 488.74,372.12L492.22,371.20A175.2,175.2 0 0 0 493.13,374.56Z" fill="#ff7c43" stroke="#fff" stroke-width="0.9"/><path d="M488.74,372.12A178.79999999999998,178.79999999999998 0 0 1 487.87,368.68L491.37,367.83A175.2,175.2 0 0 0 492.22,371.20Z" fill="#ff7c43" stroke="#fff" stroke-width="0.9"/><path d="M487.87,368.68A178.79999999999998,178.79999999999998 0 0 1 487.08,365.22L490.59,364.45A175.2,175.2 0 0 0 491.37,367.83Z" fill="#ff7c43" stroke="#fff" stroke-width="0.9"/><path d="M487.08,365.22A178.79999999999998,178.79999999999998 0 0 1 486.35,361.75L489.88,361.05A175.2,175.2 0 0 0 490.59,364.45Z" fill="#ff7c43" stroke="#fff" stroke-width="0.9"/><path d="M486.35,361.75A178.79999999999998,178.79999999999998 0 0 1 485.69,358.27L489.23,357.63A175.2,175.2 0 0 0 489.88,361.05Z" fill="#ff7c43" stroke="#fff" stroke-width="0.9"/><path d="M485.69,358.27A178.79999999999998,178.79999999999998 0 0 1 485.10,354.77L488.66,354.21A175.2,175.2 0 0 0 489.23,357.63Z" fill="#ff7c43" stroke="#fff" stroke-width="0.9"/><path d="M484.64,351.68A178.79999999999998,178.79999999999998 0 0 1 484.17,348.07L487.74,347.65A175.2,175.2 0 0 0 488.21,351.18Z" fill="#ff7c43" stroke="#fff" stroke-width="0.9"/><path d="M484.17,348.07A178.79999999999998,178.79999999999998 0 0 1 483.77,344.45L487.36,344.10A175.2,175.2 0 0 0 487.74,347.65Z" fill="#ff7c43" stroke="#fff" stroke-width="0.9"/><path d="M483.77,344.45A178.79999999999998,178.79999999999998 0 0 1 483.45,340.83L487.04,340.55A175.2,175.2 0 0 0 487.36,344.10Z" fill="#ff7c43" stroke="#fff" stroke-width="0.9"/><path d="M483.45,340.83A178.79999999999998,178.79999999999998 0 0 1 483.20,337.20L486.80,336.99A175.2,175.2 0 0 0 487.04,340.55Z" fill="#ff7c43" stroke="#fff" stroke-width="0.9"/><path d="M483.20,337.20A178.79999999999998,178.79999999999998 0 0 1 483.03,333.56L486.63,333.42A175.2,175.2 0 0 0 486.80,336.99Z" fill="#ff7c43" stroke="#fff" stroke-width="0.9"/><path d="M483.03,333.56A178.79999999999998,178.79999999999998 0 0 1 482.93,329.92L486.53,329.86A175.2,175.2 0 0 0 486.63,333.42Z" fill="#ff7c43" stroke="#fff" stroke-width="0.9"/><path d="M482.93,323.68A178.79999999999998,178.79999999999998 0 0 1 483.03,319.94L486.63,320.07A175.2,175.2 0 0 0 486.53,323.74Z" fill="#ff7c43" stroke="#fff" stroke-width="0.9"/><path d="M483.03,319.94A178.79999999999998,178.79999999999998 0 0 1 483.21,316.20L486.81,316.41A175.2,175.2 0 0 0 486.63,320.07Z" fill="#ff7c43" stroke="#fff" stroke-width="0.9"/><path d="M483.21,316.20A178.79999999999998,178.79999999999998 0 0 1 483.48,312.46L487.06,312.75A175.2,175.2 0 0 0 486.81,316.41Z" fill="#ff7c43" stroke="#fff" stroke-width="0.9"/><path d="M483.48,312.46A178.79999999999998,178.79999999999998 0 0 1 483.82,308.73L487.40,309.09A175.2,175.2 0 0 0 487.06,312.75Z" fill="#ff7c43" stroke="#fff" stroke-width="0.9"/><path d="M483.82,308.73A178.79999999999998,178.79999999999998 0 0 1 484.23,305.01L487.81,305.45A175.2,175.2 0 0 0 487.40,309.09Z" fill="#ff7c43" stroke="#fff" stroke-width="0.9"/><path d="M488.21,283.54A178.79999999999998,178.79999999999998 0 0 1 489.09,280.15L492.57,281.09A175.2,175.2 0 0 0 491.70,284.42Z" fill="#ff7c43" stroke="#fff" stroke-width="0.9"/><path d="M489.09,280.15A178.79999999999998,178.79999999999998 0 0 1 490.04,276.77L493.50,277.77A175.2,175.2 0 0 0 492.57,281.09Z" fill="#ff7c43" stroke="#fff" stroke-width="0.9"/><path d="M490.04,276.77A178.79999999999998,178.79999999999998 0 0 1 491.06,273.41L494.49,274.48A175.2,175.2 0 0 0 493.50,277.77Z" fill="#ff7c43" stroke="#fff" stroke-width="0.9"/><path d="M491.06,273.41A178.79999999999998,178.79999999999998 0 0 1 492.14,270.07L495.55,271.21A175.2,175.2 0 0 0 494.49,274.48Z" fill="#ff7c43" stroke="#fff" stroke-width="0.9"/><path d="M492.14,270.07A178.79999999999998,178.79999999999998 0 0 1 493.29,266.75L496.68,267.96A175.2,175.2 0 0 0 495.55,271.21Z" fill="#ff7c43" stroke="#fff" stroke-width="0.9"/><path d="M493.29,266.75A178.79999999999998,178.79999999999998 0 0 1 494.50,263.45L497.86,264.73A175.2,175.2 0 0 0 496.68,267.96Z" fill="#ff7c43" stroke="#fff" stroke-width="0.9"/><path d="M494.50,263.45A178.79999999999998,178.79999999999998 0 0 1 495.77,260.18L499.11,261.52A175.2,175.2 0 0 0 497.86,264.73Z" fill="#ff7c43" stroke="#fff" stroke-width="0.9"/><path d="M495.77,260.18A178.79999999999998,178.79999999999998 0 0 1 497.11,256.94L500.43,258.34A175.2,175.2 0 0 0 499.11,261.52Z" fill="#ff7c43" stroke="#fff" stroke-width="0.9"/><path d="M823.20,242.01A182.39999999999998,182.39999999999998 0 0 1 840.08,288.72L836.56,289.47A178.79999999999998,178.79999999999998 0 0 0 820.01,243.69Z" fill="#ff7c43" stroke="#fff" stroke-width="0.9"/><path d="M827.68,402.44A182.39999999999998,182.39999999999998 0 0 1 826.14,405.74L822.89,404.18A178.79999999999998,178.79999999999998 0 0 0 824.40,400.95Z" fill="#ff7c43" stroke="#fff" stroke-width="0.9"/><path d="M826.14,405.74A182.39999999999998,182.39999999999998 0 0 1 824.53,409.00L821.31,407.38A178.79999999999998,178.79999999999998 0 0 0 822.89,404.18Z" fill="#ff7c43" stroke="#fff" stroke-width="0.9"/><path d="M824.53,409.00A182.39999999999998,182.39999999999998 0 0 1 822.86,412.23L819.68,410.54A178.79999999999998,178.79999999999998 0 0 0 821.31,407.38Z" fill="#ff7c43" stroke="#fff" stroke-width="0.9"/><path d="M822.86,412.23A182.39999999999998,182.39999999999998 0 0 1 821.12,415.43L817.97,413.68A178.79999999999998,178.79999999999998 0 0 0 819.68,410.54Z" fill="#ff7c43" stroke="#fff" stroke-width="0.9"/><path d="M821.12,415.43A182.39999999999998,182.39999999999998 0 0 1 819.32,418.59L816.21,416.78A178.79999999999998,178.79999999999998 0 0 0 817.97,413.68Z" fill="#ff7c43" stroke="#fff" stroke-width="0.9"/><path d="M819.32,418.59A182.39999999999998,182.39999999999998 0 0 1 817.46,421.72L814.38,419.84A178.79999999999998,178.79999999999998 0 0 0 816.21,416.78Z" fill="#ff7c43" stroke="#fff" stroke-width="0.9"/><path d="M817.46,421.72A182.39999999999998,182.39999999999998 0 0 1 815.53,424.80L812.50,422.87A178.79999999999998,178.79999999999998 0 0 0 814.38,419.84Z" fill="#ff7c43" stroke="#fff" stroke-width="0.9"/><path d="M815.53,424.80A182.39999999999998,182.39999999999998 0 0 1 813.55,427.85L810.55,425.86A178.79999999999998,178.79999999999998 0 0 0 812.50,422.87Z" fill="#ff7c43" stroke="#fff" stroke-width="0.9"/><path d="M813.55,427.85A182.39999999999998,182.39999999999998 0 0 1 811.50,430.86L808.55,428.81A178.79999999999998,178.79999999999998 0 0 0 810.55,425.86Z" fill="#ff7c43" stroke="#fff" stroke-width="0.9"/><path d="M811.50,430.86A182.39999999999998,182.39999999999998 0 0 1 809.40,433.83L806.48,431.72A178.79999999999998,178.79999999999998 0 0 0 808.55,428.81Z" fill="#ff7c43" stroke="#fff" stroke-width="0.9"/><path d="M809.40,433.83A182.39999999999998,182.39999999999998 0 0 1 807.23,436.75L804.36,434.58A178.79999999999998,178.79999999999998 0 0 0 806.48,431.72Z" fill="#ff7c43" stroke="#fff" stroke-width="0.9"/><path d="M807.23,436.75A182.39999999999998,182.39999999999998 0 0 1 805.01,439.63L802.18,437.41A178.79999999999998,178.79999999999998 0 0 0 804.36,434.58Z" fill="#ff7c43" stroke="#fff" stroke-width="0.9"/><path d="M805.01,439.63A182.39999999999998,182.39999999999998 0 0 1 802.73,442.47L799.95,440.19A178.79999999999998,178.79999999999998 0 0 0 802.18,437.41Z" fill="#ff7c43" stroke="#fff" stroke-width="0.9"/><path d="M802.73,442.47A182.39999999999998,182.39999999999998 0 0 1 800.40,445.26L797.66,442.92A178.79999999999998,178.79999999999998 0 0 0 799.95,440.19Z" fill="#ff7c43" stroke="#fff" stroke-width="0.9"/><path d="M800.40,445.26A182.39999999999998,182.39999999999998 0 0 1 798.01,448.00L795.32,445.61A178.79999999999998,178.79999999999998 0 0 0 797.66,442.92Z" fill="#ff7c43" stroke="#fff" stroke-width="0.9"/><path d="M798.01,448.00A182.39999999999998,182.39999999999998 0 0 1 795.56,450.70L792.92,448.25A178.79999999999998,178.79999999999998 0 0 0 795.32,445.61Z" fill="#ff7c43" stroke="#fff" stroke-width="0.9"/><path d="M795.56,450.70A182.39999999999998,182.39999999999998 0 0 1 793.07,453.34L790.47,450.84A178.79999999999998,178.79999999999998 0 0 0 792.92,448.25Z" fill="#ff7c43" stroke="#fff" stroke-width="0.9"/><path d="M793.07,453.34A182.39999999999998,182.39999999999998 0 0 1 790.52,455.94L787.97,453.39A178.79999999999998,178.79999999999998 0 0 0 790.47,450.84Z" fill="#ff7c43" stroke="#fff" stroke-width="0.9"/><path d="M790.52,455.94A182.39999999999998,182.39999999999998 0 0 1 787.91,458.48L785.42,455.88A178.79999999999998,178.79999999999998 0 0 0 787.97,453.39Z" fill="#ff7c43" stroke="#fff" stroke-width="0.9"/><path d="M787.91,458.48A182.39999999999998,182.39999999999998 0 0 1 785.26,460.97L782.82,458.32A178.79999999999998,178.79999999999998 0 0 0 785.42,455.88Z" fill="#ff7c43" stroke="#fff" stroke-width="0.9"/><path d="M785.26,460.97A182.39999999999998,182.39999999999998 0 0 1 782.56,463.41L780.18,460.71A178.79999999999998,178.79999999999998 0 0 0 782.82,458.32Z" fill="#ff7c43" stroke="#fff" stroke-width="0.9"/><path d="M696.50,505.85A182.39999999999998,182.39999999999998 0 0 1 692.75,506.54L692.13,502.99A178.79999999999998,178.79999999999998 0 0 0 695.82,502.31Z" fill="#ff7c43" stroke="#fff" stroke-width="0.9"/><path d="M692.75,506.54A182.39999999999998,182.39999999999998 0 0 1 688.98,507.15L688.44,503.59A178.79999999999998,178.79999999999998 0 0 0 692.13,502.99Z" fill="#ff7c43" stroke="#fff" stroke-width="0.9"/><path d="M688.98,507.15A182.39999999999998,182.39999999999998 0 0 1 685.19,507.68L684.73,504.11A178.79999999999998,178.79999999999998 0 0 0 688.44,503.59Z" fill="#ff7c43" stroke="#fff" stroke-width="0.9"/><path d="M685.19,507.68A182.39999999999998,182.39999999999998 0 0 1 681.40,508.13L681.01,504.55A178.79999999999998,178.79999999999998 0 0 0 684.73,504.11Z" fill="#ff7c43" stroke="#fff" stroke-width="0.9"/><path d="M681.40,508.13A182.39999999999998,182.39999999999998 0 0 1 677.60,508.51L677.28,504.92A178.79999999999998,178.79999999999998 0 0 0 681.01,504.55Z" fill="#ff7c43" stroke="#fff" stroke-width="0.9"/><path d="M542.03,464.46A182.39999999999998,182.39999999999998 0 0 1 539.65,462.35L542.06,459.67A178.79999999999998,178.79999999999998 0 0 0 544.40,461.74Z" fill="#ff7c43" stroke="#fff" stroke-width="0.9"/><path d="M539.65,462.35A182.39999999999998,182.39999999999998 0 0 1 537.30,460.20L539.76,457.57A178.79999999999998,178.79999999999998 0 0 0 542.06,459.67Z" fill="#ff7c43" stroke="#fff" stroke-width="0.9"/><path d="M537.30,460.20A182.39999999999998,182.39999999999998 0 0 1 534.99,458.01L537.50,455.42A178.79999999999998,178.79999999999998 0 0 0 539.76,457.57Z" fill="#ff7c43" stroke="#fff" stroke-width="0.9"/><path d="M534.99,458.01A182.39999999999998,182.39999999999998 0 0 1 532.72,455.78L535.27,453.23A178.79999999999998,178.79999999999998 0 0 0 537.50,455.42Z" fill="#ff7c43" stroke="#fff" stroke-width="0.9"/><path d="M487.27,380.13A182.39999999999998,182.39999999999998 0 0 1 486.37,377.08L489.83,376.08A178.79999999999998,178.79999999999998 0 0 0 490.71,379.08Z" fill="#ff7c43" stroke="#fff" stroke-width="0.9"/><path d="M486.37,377.08A182.39999999999998,182.39999999999998 0 0 1 485.52,374.01L488.99,373.08A178.79999999999998,178.79999999999998 0 0 0 489.83,376.08Z" fill="#ff7c43" stroke="#fff" stroke-width="0.9"/><path d="M481.08,352.19A182.39999999999998,182.39999999999998 0 0 1 480.60,348.50L484.17,348.07A178.79999999999998,178.79999999999998 0 0 0 484.64,351.68Z" fill="#ff7c43" stroke="#fff" stroke-width="0.9"/><path d="M480.60,348.50A182.39999999999998,182.39999999999998 0 0 1 480.19,344.81L483.77,344.45A178.79999999999998,178.79999999999998 0 0 0 484.17,348.07Z" fill="#ff7c43" stroke="#fff" stroke-width="0.9"/><path d="M480.19,344.81A182.39999999999998,182.39999999999998 0 0 1 479.86,341.11L483.45,340.83A178.79999999999998,178.79999999999998 0 0 0 483.77,344.45Z" fill="#ff7c43" stroke="#fff" stroke-width="0.9"/><path d="M484.72,282.67A182.39999999999998,182.39999999999998 0 0 1 485.72,278.82L489.20,279.77A178.79999999999998,178.79999999999998 0 0 0 488.21,283.54Z" fill="#ff7c43" stroke="#fff" stroke-width="0.9"/><path d="M485.72,278.82A182.39999999999998,182.39999999999998 0 0 1 486.81,275.00L490.26,276.02A178.79999999999998,178.79999999999998 0 0 0 489.20,279.77Z" fill="#ff7c43" stroke="#fff" stroke-width="0.9"/><path d="M486.81,275.00A182.39999999999998,182.39999999999998 0 0 1 487.98,271.19L491.41,272.29A178.79999999999998,178.79999999999998 0 0 0 490.26,276.02Z" fill="#ff7c43" stroke="#fff" stroke-width="0.9"/><path d="M487.98,271.19A182.39999999999998,182.39999999999998 0 0 1 489.24,267.42L492.64,268.59A178.79999999999998,178.79999999999998 0 0 0 491.41,272.29Z" fill="#ff7c43" stroke="#fff" stroke-width="0.9"/><path d="M826.38,240.34A185.99999999999997,185.99999999999997 0 0 1 828.04,243.57L824.82,245.18A182.39999999999998,182.39999999999998 0 0 0 823.20,242.01Z" fill="#ff7c43" stroke="#fff" stroke-width="0.9"/><path d="M828.04,243.57A185.99999999999997,185.99999999999997 0 0 1 829.63,246.83L826.38,248.38A182.39999999999998,182.39999999999998 0 0 0 824.82,245.18Z" fill="#ff7c43" stroke="#fff" stroke-width="0.9"/><path d="M829.63,246.83A185.99999999999997,185.99999999999997 0 0 1 831.16,250.12L827.88,251.61A182.39999999999998,182.39999999999998 0 0 0 826.38,248.38Z" fill="#ff7c43" stroke="#fff" stroke-width="0.9"/><path d="M831.16,250.12A185.99999999999997,185.99999999999997 0 0 1 832.62,253.44L829.31,254.86A182.39999999999998,182.39999999999998 0 0 0 827.88,251.61Z" fill="#ff7c43" stroke="#fff" stroke-width="0.9"/><path d="M832.62,253.44A185.99999999999997,185.99999999999997 0 0 1 834.02,256.79L830.69,258.15A182.39999999999998,182.39999999999998 0 0 0 829.31,254.86Z" fill="#ff7c43" stroke="#fff" stroke-width="0.9"/><path d="M834.02,256.79A185.99999999999997,185.99999999999997 0 0 1 835.35,260.17L831.99,261.45A182.39999999999998,182.39999999999998 0 0 0 830.69,258.15Z" fill="#ff7c43" stroke="#fff" stroke-width="0.9"/><path d="M835.35,260.17A185.99999999999997,185.99999999999997 0 0 1 836.62,263.57L833.24,264.79A182.39999999999998,182.39999999999998 0 0 0 831.99,261.45Z" fill="#ff7c43" stroke="#fff" stroke-width="0.9"/><path d="M836.62,263.57A185.99999999999997,185.99999999999997 0 0 1 837.82,266.99L834.41,268.15A182.39999999999998,182.39999999999998 0 0 0 833.24,264.79Z" fill="#ff7c43" stroke="#fff" stroke-width="0.9"/><path d="M837.82,266.99A185.99999999999997,185.99999999999997 0 0 1 838.95,270.44L835.52,271.53A182.39999999999998,182.39999999999998 0 0 0 834.41,268.15Z" fill="#ff7c43" stroke="#fff" stroke-width="0.9"/><path d="M838.95,270.44A185.99999999999997,185.99999999999997 0 0 1 840.02,273.91L836.57,274.93A182.39999999999998,182.39999999999998 0 0 0 835.52,271.53Z" fill="#ff7c43" stroke="#fff" stroke-width="0.9"/><path d="M840.02,273.91A185.99999999999997,185.99999999999997 0 0 1 841.02,277.40L837.55,278.35A182.39999999999998,182.39999999999998 0 0 0 836.57,274.93Z" fill="#ff7c43" stroke="#fff" stroke-width="0.9"/><path d="M841.02,277.40A185.99999999999997,185.99999999999997 0 0 1 841.95,280.90L838.46,281.79A182.39999999999998,182.39999999999998 0 0 0 837.55,278.35Z" fill="#ff7c43" stroke="#fff" stroke-width="0.9"/><path d="M841.95,280.90A185.99999999999997,185.99999999999997 0 0 1 842.81,284.43L839.30,285.25A182.39999999999998,182.39999999999998 0 0 0 838.46,281.79Z" fill="#ff7c43" stroke="#fff" stroke-width="0.9"/><path d="M842.81,284.43A185.99999999999997,185.99999999999997 0 0 1 843.60,287.97L840.08,288.72A182.39999999999998,182.39999999999998 0 0 0 839.30,285.25Z" fill="#ff7c43" stroke="#fff" stroke-width="0.9"/><path d="M815.90,430.81A185.99999999999997,185.99999999999997 0 0 1 813.86,433.78L810.91,431.71A182.39999999999998,182.39999999999998 0 0 0 812.92,428.80Z" fill="#ff7c43" stroke="#fff" stroke-width="0.9"/><path d="M813.86,433.78A185.99999999999997,185.99999999999997 0 0 1 811.75,436.71L808.85,434.58A182.39999999999998,182.39999999999998 0 0 0 810.91,431.71Z" fill="#ff7c43" stroke="#fff" stroke-width="0.9"/><path d="M811.75,436.71A185.99999999999997,185.99999999999997 0 0 1 809.59,439.60L806.73,437.42A182.39999999999998,182.39999999999998 0 0 0 808.85,434.58Z" fill="#ff7c43" stroke="#fff" stroke-width="0.9"/><path d="M809.59,439.60A185.99999999999997,185.99999999999997 0 0 1 807.38,442.45L804.56,440.21A182.39999999999998,182.39999999999998 0 0 0 806.73,437.42Z" fill="#ff7c43" stroke="#fff" stroke-width="0.9"/><path d="M807.38,442.45A185.99999999999997,185.99999999999997 0 0 1 805.11,445.25L802.33,442.96A182.39999999999998,182.39999999999998 0 0 0 804.56,440.21Z" fill="#ff7c43" stroke="#fff" stroke-width="0.9"/><path d="M805.11,445.25A185.99999999999997,185.99999999999997 0 0 1 802.78,448.01L800.05,445.66A182.39999999999998,182.39999999999998 0 0 0 802.33,442.96Z" fill="#ff7c43" stroke="#fff" stroke-width="0.9"/><path d="M802.78,448.01A185.99999999999997,185.99999999999997 0 0 1 800.41,450.72L797.72,448.32A182.39999999999998,182.39999999999998 0 0 0 800.05,445.66Z" fill="#ff7c43" stroke="#fff" stroke-width="0.9"/><path d="M800.41,450.72A185.99999999999997,185.99999999999997 0 0 1 797.98,453.39L795.34,450.94A182.39999999999998,182.39999999999998 0 0 0 797.72,448.32Z" fill="#ff7c43" stroke="#fff" stroke-width="0.9"/><path d="M797.98,453.39A185.99999999999997,185.99999999999997 0 0 1 795.50,456.01L792.91,453.51A182.39999999999998,182.39999999999998 0 0 0 795.34,450.94Z" fill="#ff7c43" stroke="#fff" stroke-width="0.9"/><path d="M829.57,238.67A189.6,189.6 0 0 1 831.26,241.96L828.04,243.57A186.0,186.0 0 0 0 826.38,240.34Z" fill="#ff7c43" stroke="#fff" stroke-width="0.9"/><path d="M831.26,241.96A189.6,189.6 0 0 1 832.88,245.28L829.63,246.83A186.0,186.0 0 0 0 828.04,243.57Z" fill="#ff7c43" stroke="#fff" stroke-width="0.9"/><path d="M832.88,245.28A189.6,189.6 0 0 1 834.44,248.64L831.16,250.12A186.0,186.0 0 0 0 829.63,246.83Z" fill="#ff7c43" stroke="#fff" stroke-width="0.9"/><path d="M834.44,248.64A189.6,189.6 0 0 1 835.93,252.02L832.62,253.44A186.0,186.0 0 0 0 831.16,250.12Z" fill="#ff7c43" stroke="#fff" stroke-width="0.9"/><path d="M835.93,252.02A189.6,189.6 0 0 1 837.36,255.44L834.02,256.79A186.0,186.0 0 0 0 832.62,253.44Z" fill="#ff7c43" stroke="#fff" stroke-width="0.9"/><path d="M837.36,255.44A189.6,189.6 0 0 1 838.72,258.88L835.35,260.17A186.0,186.0 0 0 0 834.02,256.79Z" fill="#ff7c43" stroke="#fff" stroke-width="0.9"/><path d="M838.72,258.88A189.6,189.6 0 0 1 840.01,262.34L836.62,263.57A186.0,186.0 0 0 0 835.35,260.17Z" fill="#ff7c43" stroke="#fff" stroke-width="0.9"/><path d="M840.01,262.34A189.6,189.6 0 0 1 841.23,265.83L837.82,266.99A186.0,186.0 0 0 0 836.62,263.57Z" fill="#ff7c43" stroke="#fff" stroke-width="0.9"/><path d="M841.23,265.83A189.6,189.6 0 0 1 842.39,269.35L838.95,270.44A186.0,186.0 0 0 0 837.82,266.99Z" fill="#ff7c43" stroke="#fff" stroke-width="0.9"/><path d="M842.39,269.35A189.6,189.6 0 0 1 843.47,272.88L840.02,273.91A186.0,186.0 0 0 0 838.95,270.44Z" fill="#ff7c43" stroke="#fff" stroke-width="0.9"/><path d="M843.47,272.88A189.6,189.6 0 0 1 844.49,276.44L841.02,277.40A186.0,186.0 0 0 0 840.02,273.91Z" fill="#ff7c43" stroke="#fff" stroke-width="0.9"/><path d="M844.49,276.44A189.6,189.6 0 0 1 845.44,280.01L841.95,280.90A186.0,186.0 0 0 0 841.02,277.40Z" fill="#ff7c43" stroke="#fff" stroke-width="0.9"/><path d="M845.44,280.01A189.6,189.6 0 0 1 846.31,283.61L842.81,284.43A186.0,186.0 0 0 0 841.95,280.90Z" fill="#ff7c43" stroke="#fff" stroke-width="0.9"/><path d="M846.31,283.61A189.6,189.6 0 0 1 847.12,287.22L843.60,287.97A186.0,186.0 0 0 0 842.81,284.43Z" fill="#ff7c43" stroke="#fff" stroke-width="0.9"/><defs><path id="p0" d="M618.96,330.54A42.9,42.9 0 0 0 704.44,330.54" fill="none"/><path id="p1" d="M583.92,373.07A90.5,90.5 0 0 0 740.66,371.02" fill="none"/><path id="p2" d="M564.66,425.20A138.2,138.2 0 0 0 775.46,405.28" fill="none"/><path id="p3" d="M584.32,296.79A83,83 0 0 1 677.82,245.38" fill="none"/></defs><text font-family="Liberation Sans" font-size="12.6" fill="#fff" stroke="#fff" stroke-width="0.35"><textPath href="#p0" startOffset="50%" text-anchor="middle">Chief Executive Officer</textPath></text><text font-family="Liberation Sans" font-size="11.9" fill="#fff" stroke="#fff" stroke-width="0.3"><textPath href="#p1" startOffset="50%" text-anchor="middle">Operations Division</textPath></text><text font-family="Liberation Sans" font-size="11.8" fill="#fff" stroke="#fff" stroke-width="0.3"><textPath href="#p2" startOffset="50%" text-anchor="middle">Chief Operations Officer</textPath></text><text font-family="Liberation Sans" font-size="6.4" fill="#fff" stroke="#fff" stroke-width="0.25"><textPath href="#p3" startOffset="50%" text-anchor="middle" textLength="64" lengthAdjust="spacingAndGlyphs">Sales and Marketing Division</textPath></text><text transform="translate(566.03,234.41) rotate(314.0)" font-family="Liberation Sans" font-weight="bold" font-size="4.6" fill="#ffffff" text-anchor="middle" dominant-baseline="central" textLength="13" lengthAdjust="spacingAndGlyphs">Portfolio 1</text><text transform="translate(583.52,219.20) rotate(324.0)" font-family="Liberation Sans" font-weight="bold" font-size="5.0" fill="#ffffff" text-anchor="middle" dominant-baseline="central" textLength="17" lengthAdjust="spacingAndGlyphs">Portfolio 2</text><text transform="translate(604.65,206.66) rotate(334.6)" font-family="Liberation Sans" font-weight="bold" font-size="5.0" fill="#ffffff" text-anchor="middle" dominant-baseline="central" textLength="16" lengthAdjust="spacingAndGlyphs">Portfolio 3</text><text transform="translate(626.16,198.64) rotate(344.5)" font-family="Liberation Sans" font-weight="bold" font-size="4.4" fill="#ffffff" text-anchor="middle" dominant-baseline="central" textLength="13" lengthAdjust="spacingAndGlyphs">Portfolio 4</text><text transform="translate(639.52,195.66) rotate(350.4)" font-family="Liberation Sans" font-weight="bold" font-size="4.4" fill="#ffffff" text-anchor="middle" dominant-baseline="central" textLength="6" lengthAdjust="spacingAndGlyphs">&#8212;</text><text transform="translate(650.11,194.31) rotate(355.0)" font-family="Liberation Sans" font-weight="bold" font-size="4.4" fill="#ffffff" text-anchor="middle" dominant-baseline="central" textLength="10" lengthAdjust="spacingAndGlyphs">&#8212;&#8212;</text><text transform="translate(559.89,244.36) rotate(309.0)" font-family="Liberation Sans" font-weight="bold" font-size="4.5" fill="#ffffff" text-anchor="middle" dominant-baseline="central">&#9633;</text><text transform="translate(544.50,261.84) rotate(299.0)" font-family="Liberation Sans" font-weight="bold" font-size="5.5" fill="#ffe0c0" text-anchor="middle" dominant-baseline="central">|</text><text transform="translate(668.20,193.96) rotate(2.8)" font-family="Liberation Sans" font-weight="bold" font-size="4" fill="#ffffff" text-anchor="middle" dominant-baseline="central" textLength="5" lengthAdjust="spacingAndGlyphs">&#8212;</text><text transform="translate(678.83,194.91) rotate(7.4)" font-family="Liberation Sans" font-weight="bold" font-size="4.2" fill="#ffffff" text-anchor="middle" dominant-baseline="central" textLength="13" lengthAdjust="spacingAndGlyphs">Portfolio</text><text transform="translate(672.09,240.93) rotate(6.9)" font-family="Liberation Sans" font-weight="bold" font-size="3.4" fill="#ffffff" text-anchor="middle" dominant-baseline="central" textLength="12" lengthAdjust="spacingAndGlyphs">&#8212;&#8212;&#8212;</text><text transform="translate(691.75,246.86) rotate(20.6)" font-family="Liberation Sans" font-weight="bold" font-size="3.4" fill="#ffffff" text-anchor="middle" dominant-baseline="central" textLength="16.5" lengthAdjust="spacingAndGlyphs">Product Division</text><text transform="translate(717.91,263.04) rotate(41.4)" font-family="Liberation Sans" font-weight="bold" font-size="3.4" fill="#ffffff" text-anchor="middle" dominant-baseline="central" textLength="29" lengthAdjust="spacingAndGlyphs">Human Resources Division</text><text transform="translate(748.60,226.12) rotate(40.8)" font-family="Liberation Sans" font-weight="bold" font-size="5" fill="#ffffff" text-anchor="middle" dominant-baseline="central">&#9633;</text><text transform="translate(756.56,233.58) rotate(45.5)" font-family="Liberation Sans" font-weight="bold" font-size="5" fill="#ffffff" text-anchor="middle" dominant-baseline="central" textLength="7" lengthAdjust="spacingAndGlyphs">&#8212;</text><text transform="translate(766.65,245.10) rotate(52.1)" font-family="Liberation Sans" font-weight="bold" font-size="5" fill="#ffffff" text-anchor="middle" dominant-baseline="central">&#9633;</text></svg>
</body></html>
